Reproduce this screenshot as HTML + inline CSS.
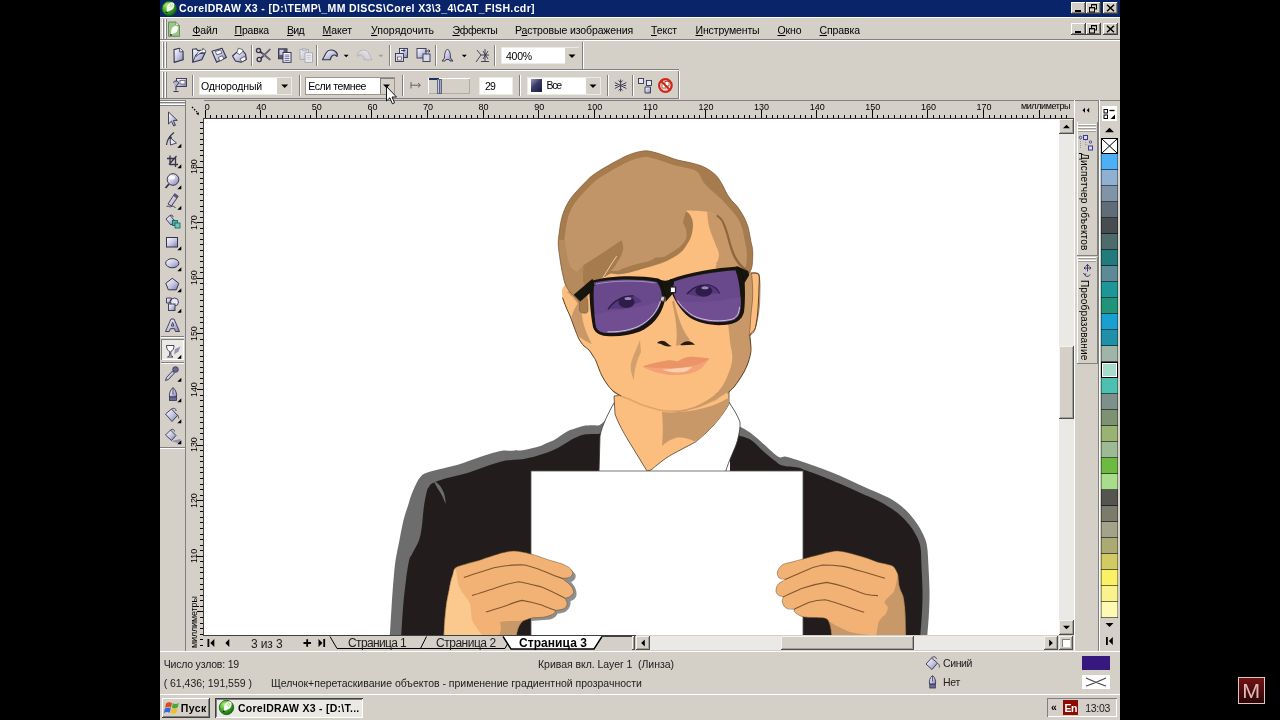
<!DOCTYPE html>
<html lang="ru"><head><meta charset="utf-8"><title>CorelDRAW X3 - [D:\TEMP\_MM DISCS\Corel X3\3_4\CAT_FISH.cdr]</title>
<style>

html,body{margin:0;padding:0;background:#000;}
body{width:1280px;height:720px;overflow:hidden;font-family:"Liberation Sans",sans-serif;font-size:11px;color:#000;}
#app{position:absolute;left:0;top:0;width:1280px;height:720px;background:#000;overflow:hidden;filter:blur(0.35px);}
.abs{position:absolute;}
#win{position:absolute;left:160px;top:0;width:960px;height:720px;background:#d4d0c8;}
#title{position:absolute;left:160px;top:0;width:960px;height:17px;background:#0a246a;}
#title .txt{position:absolute;left:19px;top:1px;color:#fff;font-weight:bold;font-size:11px;line-height:14px;white-space:nowrap;letter-spacing:0px;}
.t{position:absolute;white-space:pre;line-height:13px;font-size:11px;color:#000;}
.menu u{text-decoration:underline;}
.wbtn{position:absolute;width:15px;height:12px;background:#d4d0c8;box-shadow:inset -1px -1px 0 #404040, inset 1px 1px 0 #fff, inset -2px -2px 0 #808080;}
.sunken{position:absolute;background:#fff;box-shadow:inset 1px 1px 0 #808080, inset -1px -1px 0 #fff, inset 2px 2px 0 #404040, inset -2px -2px 0 #d4d0c8;}
.raised{position:absolute;background:#d4d0c8;box-shadow:inset -1px -1px 0 #404040, inset 1px 1px 0 #fff, inset -2px -2px 0 #808080, inset 2px 2px 0 #d4d0c8;}
.sbtn{position:absolute;background:#d4d0c8;box-shadow:inset -1px -1px 0 #505050, inset 1px 1px 0 #f4f2ee, inset -2px -2px 0 #a0a098;}
.hline{position:absolute;height:1px;background:#808080;box-shadow:0 1px 0 #fff;}
.vline{position:absolute;width:1px;background:#808080;box-shadow:1px 0 0 #fff;}
.grip{position:absolute;width:3px;background:#d4d0c8;box-shadow:inset 1px 1px 0 #fff, inset -1px -1px 0 #808080;}
.grip2{position:absolute;width:1px;background:#fff;box-shadow:1px 0 0 #808080;}
.track{position:absolute;background:#ebe9e5;}
.sw{position:absolute;left:1101px;width:17px;}
svg{position:absolute;left:0;top:0;overflow:visible;}
.vt{position:absolute;white-space:nowrap;font-size:11px;line-height:13px;transform-origin:0 0;}

</style></head>
<body>
<div id="app">
<div id="win"></div>
<div class="abs" id="canvas" style="left:204px;top:119px;width:855px;height:516px;background:#fff;"></div>
<svg width="1280" height="720" viewBox="0 0 1280 720">
<defs><clipPath id="shc"><rect x="531" y="471" width="272" height="170"/></clipPath><clipPath id="cv"><rect x="204" y="119" width="855" height="516"/></clipPath><filter id="soft" x="-5%" y="-5%" width="110%" height="110%"><feGaussianBlur stdDeviation="0.45"/></filter></defs>
<g clip-path="url(#cv)" filter="url(#soft)">
<path d="M607.5,418.0 C606.2,419.1 602.4,423.7 599.8,424.9 C597.2,426.1 594.6,425.1 592.0,425.3 C589.4,425.5 587.0,425.3 584.2,425.8 C581.4,426.3 577.9,427.5 575.0,428.5 C572.1,429.5 570.0,429.9 566.7,431.7 C563.4,433.5 558.3,437.5 555.0,439.4 C551.7,441.3 549.6,441.9 547.0,443.0 C544.4,444.1 543.4,445.1 539.5,446.3 C535.6,447.5 528.5,449.4 523.9,450.1 C519.3,450.9 515.9,450.6 512.0,450.8 C508.1,451.0 506.4,449.9 500.6,451.1 C494.8,452.3 484.3,455.6 477.2,457.9 C470.1,460.2 464.3,462.8 457.8,464.7 C451.3,466.6 443.8,468.1 438.3,469.6 C432.8,471.1 427.8,472.2 424.7,473.5 C421.6,474.8 421.3,476.1 420.0,477.5 C418.7,478.9 418.2,479.8 417.0,482.2 C415.8,484.6 413.8,488.8 412.5,492.0 C411.2,495.2 410.7,496.8 409.2,501.7 C407.7,506.6 404.9,514.6 403.3,521.1 C401.7,527.6 400.7,534.1 399.4,540.6 C398.1,547.1 396.6,553.4 395.6,560.0 C394.6,566.6 394.2,572.0 393.5,580.0 C392.8,588.0 392.1,598.0 391.5,608.0 C390.9,618.0 389.9,634.7 389.6,640.0 L610,640 L610,436 Z" fill="#6d6d6d"/>
<path d="M736.0,422.0 C736.4,422.6 736.0,423.7 738.5,425.6 C741.0,427.5 746.6,430.1 751.0,433.3 C755.4,436.5 760.2,441.1 764.7,445.0 C769.2,448.9 774.8,454.8 778.3,456.7 C781.8,458.6 782.1,455.9 786.0,456.7 C789.9,457.5 795.9,459.6 801.7,461.5 C807.5,463.4 814.5,465.9 821.0,468.3 C827.5,470.7 834.1,473.2 840.6,476.0 C847.1,478.8 853.5,482.0 860.0,484.9 C866.5,487.8 873.7,490.9 879.5,493.6 C885.3,496.4 890.5,498.5 895.0,501.4 C899.5,504.3 903.1,507.4 906.7,511.0 C910.3,514.6 913.6,518.9 916.4,522.8 C919.1,526.7 921.4,530.6 923.2,534.5 C925.0,538.4 926.1,540.6 927.0,546.0 C927.9,551.4 928.1,559.5 928.5,567.0 C928.9,574.5 929.4,583.5 929.5,591.0 C929.6,598.5 929.4,603.8 929.0,612.0 C928.6,620.2 927.3,635.3 927.0,640.0 L730,640 L730,436 Z" fill="#6d6d6d"/>
<path d="M603.0,430.0 C602.8,430.6 603.4,432.9 601.7,433.6 C600.0,434.3 595.9,433.8 593.0,434.0 C590.1,434.2 587.0,434.0 584.2,434.6 C581.4,435.2 578.6,436.4 576.0,437.5 C573.4,438.6 572.1,439.4 568.6,441.4 C565.1,443.3 559.9,446.9 555.0,449.2 C550.1,451.5 544.7,453.4 539.5,455.0 C534.3,456.6 529.7,457.9 523.9,458.9 C518.1,459.9 511.0,459.5 504.5,460.8 C498.0,462.1 491.5,464.6 485.0,466.7 C478.5,468.8 472.1,471.6 465.6,473.5 C459.1,475.4 451.6,476.7 446.1,478.3 C440.6,479.9 435.4,481.7 432.5,483.2 C429.6,484.7 429.5,486.0 428.5,487.5 C427.5,489.0 427.5,488.7 426.7,492.0 C425.9,495.3 424.6,501.7 423.8,507.5 C423.0,513.3 422.6,521.5 421.8,527.0 C421.0,532.5 420.5,536.1 418.9,540.6 C417.3,545.1 413.6,551.0 412.0,554.2 C410.4,557.4 410.2,555.7 409.2,560.0 C408.2,564.3 407.0,571.8 406.0,579.8 C405.0,587.8 403.8,598.0 403.0,608.0 C402.2,618.0 401.3,634.7 401.0,640.0 L610,640 L610,440 Z" fill="#211e1b"/>
<path d="M736.0,432.0 C736.4,432.6 736.0,434.0 738.5,435.3 C741.0,436.6 747.0,437.4 751.0,440.0 C755.0,442.6 758.9,447.4 762.8,450.8 C766.7,454.2 771.3,458.2 774.5,460.6 C777.7,463.0 778.3,464.3 782.2,465.4 C786.1,466.5 793.9,466.6 797.8,467.4 C801.7,468.2 801.7,468.9 805.6,470.3 C809.5,471.7 815.2,473.7 821.0,476.0 C826.8,478.3 834.1,481.2 840.6,484.0 C847.1,486.8 853.5,489.8 860.0,492.7 C866.5,495.6 873.7,498.3 879.5,501.4 C885.3,504.4 890.5,507.6 895.0,511.0 C899.5,514.4 903.5,518.2 906.7,521.8 C910.0,525.4 912.2,528.5 914.5,532.5 C916.8,536.5 919.1,540.2 920.3,546.0 C921.5,551.8 921.1,559.5 921.5,567.0 C921.9,574.5 922.4,583.5 922.5,591.0 C922.6,598.5 922.4,603.8 922.0,612.0 C921.6,620.2 920.3,635.3 920.0,640.0 L730,640 L730,440 Z" fill="#211e1b"/>
<path d="M434,481.500 C438,482.500 441.500,487 443.500,492 C445,496 445.800,500 445.500,504 C443.500,498 441,493 438,489 C436.500,486.500 435,484 434,481.500Z" fill="#6d6d6d"/>
<path d="M614,403 C609,412 602,425 600,436 L599,472 L725.500,472 C729,460 735,449 737.400,440.800 C739,434 740.500,428 740,422 C737,414 732,407 729,402 Z" fill="#fff" stroke="#333" stroke-width="0.8"/>
<path d="M614,396 L615,414 C619,425 624,433 628,440 L647,471 L651,470 C657,465 664,459 671,455 C680,450 688,446 695.5,442 C708,432 720,420 729,404 L729,385 Z" fill="#fbbe7e" stroke="#3a2a1a" stroke-width="0.7"/>
<path d="M662,412 C685,414 712,408 728.500,398 L729,404 C720,420 708,432 695.500,442 C690,438.500 683,437 677,437.500 C671,439 666,442 662,446 C663,436 663,424 662,412Z" fill="#c99868"/>
<rect x="531" y="471" width="272" height="170" fill="#fff" stroke="#555" stroke-width="0.8"/>
<path d="M562.5,297.5 C562.7,301.2 564.8,303.9 566.0,307.0 C567.2,310.1 568.6,312.5 570.0,316.0 C571.4,319.5 573.0,324.2 574.5,328.0 C576.0,331.8 577.4,336.0 579.0,339.0 C580.6,342.0 582.3,344.2 584.0,346.0 C585.7,347.8 587.5,348.3 589.0,350.0 C590.5,351.7 591.8,354.2 593.0,356.0 C594.2,357.8 595.0,358.8 596.0,361.0 C597.0,363.2 598.0,366.5 599.0,369.0 C600.0,371.5 600.7,373.5 602.0,376.0 C603.3,378.5 605.2,381.5 607.0,384.0 C608.8,386.5 610.7,389.0 613.0,391.0 C615.3,393.0 618.2,394.6 621.0,396.0 C623.8,397.4 626.7,398.1 630.0,399.5 C633.3,400.9 637.2,403.1 641.0,404.5 C644.8,405.9 649.0,407.0 652.5,408.0 C656.0,409.0 658.9,410.0 662.0,410.5 C665.1,411.0 667.5,411.0 671.0,411.0 C674.5,411.0 679.2,411.0 683.0,410.5 C686.8,410.0 690.8,408.8 694.0,408.0 C697.2,407.2 699.5,406.4 702.0,405.5 C704.5,404.6 706.3,403.7 709.0,402.5 C711.7,401.3 714.9,400.1 718.0,398.5 C721.1,396.9 724.8,394.9 727.5,393.0 C730.2,391.1 732.1,389.2 734.0,387.0 C735.9,384.8 737.3,382.5 739.0,380.0 C740.7,377.5 742.5,374.8 744.0,372.0 C745.5,369.2 747.0,365.7 748.0,363.0 C749.0,360.3 749.5,358.2 750.0,356.0 C750.5,353.8 750.9,352.3 751.0,350.0 C751.1,347.7 750.7,344.5 750.5,342.0 C750.3,339.5 749.6,336.8 750.0,335.0 C750.4,333.2 752.1,332.8 753.0,331.5 C753.9,330.2 754.8,330.2 755.5,327.5 C756.2,324.8 757.0,319.4 757.5,315.0 C758.0,310.6 758.2,305.5 758.5,301.0 C758.8,296.5 758.9,292.3 759.0,288.0 C759.1,283.7 759.7,277.5 759.0,275.0 C758.3,272.5 756.3,273.3 755.0,273.0 C753.7,272.7 752.2,276.8 751.0,273.0 C749.8,269.2 756.5,261.3 748.0,250.0 C739.5,238.7 718.0,206.7 700.0,205.0 C682.0,203.3 658.3,229.2 640.0,240.0 C621.7,250.8 602.5,262.5 590.0,270.0 C577.5,277.5 569.6,280.4 565.0,285.0 C560.4,289.6 562.3,293.8 562.5,297.5Z" fill="#fbbe7e"/>
<path d="M613.0,391.0 C614.3,391.8 618.2,394.6 621.0,396.0 C623.8,397.4 626.7,398.1 630.0,399.5 C633.3,400.9 637.2,403.1 641.0,404.5 C644.8,405.9 649.0,407.0 652.5,408.0 C656.0,409.0 658.9,410.0 662.0,410.5 C665.1,411.0 667.5,411.0 671.0,411.0 C674.5,411.0 679.2,411.0 683.0,410.5 C686.8,410.0 690.8,408.8 694.0,408.0 C697.2,407.2 699.5,406.4 702.0,405.5 C704.5,404.6 706.3,403.7 709.0,402.5 C711.7,401.3 716.5,399.2 718.0,398.5" fill="none" stroke="#e2a468" stroke-width="1.600"/>
<path d="M716,262 C722,285 726,300 727.500,318 C728.400,326 729.500,336 730.300,344 C731.500,350 732.500,354 732.300,357.800 C732,364 730.500,369 728.400,373.400 C726,380 723,386 718.600,391 C712,398 704,403 695.300,406.500 C688,409.500 679,411.500 670,412 C680,412.500 688,410.500 694,408 C700,406.500 706,404 709,402.500 C718,398.500 727.500,393 734,387 C739,381 745,371 748,363 C751,352 751,342 750,335 C755,330 757,318 758.500,301 L759,275 L751,273 L748,262Z" fill="#c99868"/>
<path d="M751.500,273.500 C754,272.500 757,273 759,274.500 C760,280 760.300,285 760,290 C760,295 759.800,300 759.500,305 C759,310 758.500,315 757.500,319 C756.500,324 755.500,328 754,332 C752.500,334 751,335 749,335.500 C750,331 750.300,326 750.500,320 C751,313 752,306 752.500,300 C752.800,295 752.800,290 752.500,285 C752.300,281 752,277 751.500,273.500Z" fill="#fbbe7e" stroke="#5a4028" stroke-width="0.500"/>
<path d="M579,301.400 C576,306 573,311 571.400,317 C573,324 576,331 579,336.400 C583,339.500 587,342 591.800,344 C589,339 587,334 585,328.600 C583.500,324 582.500,320 582,315 C581.500,310 580.500,305 579,301.400Z" fill="#c99868"/>
<path d="M567,292 C572,296 578,302 582,312 C584,300 582,292 577,287Z" fill="#c99868"/>
<path d="M640,340 C636,350 632,358 631,364 C630,370 632,376 634,380 C634,372 636,362 641,352Z" fill="#c99868" opacity="0.8"/>
<path d="M674,300 C677,315 682,330 690,340 C686,343 680,345 676,346 C678,335 676,318 672,302Z" fill="#c99868"/>
<path d="M657,343 C660,340 664,340 667,343 C669,345 671,346 672,346 C668,347 664,346 661,344 Z" fill="#2a1a10"/>
<path d="M680,345 C684,341 689,340 693,343 L695,345 C690,344 685,346 680,345Z" fill="#2a1a10"/>
<path d="M562.5,297.5 C563.1,299.1 564.8,303.9 566.0,307.0 C567.2,310.1 568.6,312.5 570.0,316.0 C571.4,319.5 573.0,324.2 574.5,328.0 C576.0,331.8 577.4,336.0 579.0,339.0 C580.6,342.0 582.3,344.2 584.0,346.0 C585.7,347.8 587.5,348.3 589.0,350.0 C590.5,351.7 591.8,354.2 593.0,356.0 C594.2,357.8 595.0,358.8 596.0,361.0 C597.0,363.2 598.0,366.5 599.0,369.0 C600.0,371.5 600.7,373.5 602.0,376.0 C603.3,378.5 605.2,381.5 607.0,384.0 C608.8,386.5 610.7,389.0 613.0,391.0 C615.3,393.0 619.7,395.2 621.0,396.0" fill="none" stroke="#4a3018" stroke-width="0.900"/>
<path d="M727.5,393.0 C728.6,392.0 732.1,389.2 734.0,387.0 C735.9,384.8 737.3,382.5 739.0,380.0 C740.7,377.5 742.5,374.8 744.0,372.0 C745.5,369.2 747.0,365.7 748.0,363.0 C749.0,360.3 749.5,358.2 750.0,356.0 C750.5,353.8 750.9,352.3 751.0,350.0 C751.1,347.7 750.7,344.5 750.5,342.0 C750.3,339.5 749.6,336.8 750.0,335.0 C750.4,333.2 752.1,332.8 753.0,331.5 C753.9,330.2 754.8,330.2 755.5,327.5 C756.2,324.8 757.0,319.4 757.5,315.0 C758.0,310.6 758.2,305.5 758.5,301.0 C758.8,296.5 758.9,292.3 759.0,288.0 C759.1,283.7 759.7,277.5 759.0,275.0 C758.3,272.5 756.3,273.3 755.0,273.0 C753.7,272.7 751.7,273.0 751.0,273.0" fill="none" stroke="#4a3018" stroke-width="0.900"/>
<path d="M642.500,366.500 C650,364 658,362 665,361 C670,360 674,361 677.500,361.500 C682,359 686,357 690,356.800 C697,357 704,357.800 709.500,358.500 C707,362 704,365 702.500,367.500 C698,371 693,373 687.500,374 C682,375 676,375.300 670,375 C664,374.300 659,373 655,372 C650,370.500 646,368.500 642.500,366.500Z" fill="#f2a274"/>
<path d="M642.500,366.500 C650,364 658,362 665,361 C670,360 674,361 677.500,361.500 C682,359 686,357 690,356.800 C697,357 704,357.800 709.500,358.500 C705,361.500 700,364 694,365.500 C686,367.500 676,368 668,368 C659,368 650,367.500 642.500,366.500Z" fill="#ea9468"/>
<path d="M662,369.500 C670,368.800 684,368 692,366.500 C691,369 688,371 684,372 C677,373 668,372.500 662,369.500Z" fill="#fbcfb0"/>
<clipPath id="hc"><path d="M647.0,150.8 C649.8,151.1 654.2,152.2 657.0,153.0 C659.8,153.8 661.7,154.5 664.0,155.3 C666.3,156.1 668.7,157.0 671.0,157.8 C673.3,158.6 675.5,159.4 677.8,160.0 C680.1,160.6 682.7,161.1 685.0,161.6 C687.3,162.1 689.4,162.4 691.7,163.0 C694.0,163.6 696.7,164.2 699.0,165.0 C701.3,165.8 703.5,166.7 705.6,167.8 C707.7,168.9 709.6,170.1 711.5,171.5 C713.4,172.9 715.2,174.3 716.7,176.0 C718.2,177.7 719.4,179.7 720.5,181.5 C721.6,183.3 722.7,185.2 723.6,187.0 C724.5,188.8 725.1,190.3 726.0,192.0 C726.9,193.7 727.8,195.3 729.0,197.0 C730.2,198.7 731.6,200.4 733.0,202.0 C734.4,203.6 736.2,205.0 737.5,206.7 C738.8,208.4 739.9,210.2 741.0,212.0 C742.1,213.8 743.4,215.9 744.4,217.8 C745.4,219.7 746.1,221.6 746.8,223.5 C747.5,225.4 748.0,226.2 748.6,229.0 C749.2,231.8 750.1,236.8 750.7,240.0 C751.3,243.2 752.0,245.3 752.4,248.0 C752.8,250.7 752.9,252.9 752.8,256.0 C752.7,259.1 752.5,264.0 752.0,266.7 C751.5,269.4 750.5,271.3 749.5,272.0 C748.5,272.7 747.1,271.8 746.0,271.0 C744.9,270.2 743.8,268.6 742.6,267.3 C741.4,266.1 740.2,264.9 739.0,263.5 C737.8,262.1 736.6,260.8 735.6,259.0 C734.6,257.2 733.8,255.0 733.0,253.0 C732.2,251.0 731.5,249.3 730.8,247.2 C730.1,245.1 729.6,242.7 729.0,240.5 C728.4,238.3 728.0,236.4 727.3,234.2 C726.6,232.0 725.8,229.7 725.0,227.5 C724.2,225.3 723.4,222.9 722.6,221.3 C721.8,219.7 721.0,219.0 720.0,218.0 C719.0,217.0 718.0,216.1 716.7,215.3 C715.4,214.5 713.6,213.8 712.0,213.2 C710.4,212.6 709.7,212.2 707.2,211.8 C704.7,211.4 700.4,211.0 697.0,210.8 C693.6,210.6 687.9,210.1 686.6,210.6 C685.4,211.1 688.6,212.8 689.5,214.0 C690.4,215.2 691.1,216.5 691.7,217.8 C692.3,219.1 692.8,220.6 693.0,222.0 C693.2,223.4 693.2,224.2 693.0,226.0 C692.8,227.8 692.5,230.8 692.0,233.0 C691.5,235.2 691.0,236.8 690.0,239.0 C689.0,241.2 687.3,243.9 686.0,246.0 C684.7,248.1 683.8,249.7 682.0,251.4 C680.2,253.2 677.5,254.9 675.0,256.5 C672.5,258.1 669.5,259.7 666.7,261.0 C663.9,262.3 660.8,263.6 658.0,264.5 C655.2,265.4 653.0,265.9 650.0,266.7 C647.0,267.5 643.7,268.4 640.0,269.5 C636.3,270.6 631.5,272.2 627.8,273.0 C624.1,273.8 620.8,274.4 618.0,274.5 C615.2,274.6 613.1,273.3 611.0,273.6 C608.9,273.9 607.3,275.5 605.5,276.4 C603.7,277.3 601.6,278.2 600.0,279.0 C598.4,279.8 597.3,280.2 596.0,281.0 C594.7,281.8 593.2,282.5 592.0,284.0 C590.8,285.5 589.8,287.5 589.0,290.0 C588.2,292.5 587.8,295.3 587.5,299.0 C587.2,302.7 588.8,309.9 587.5,312.0 C586.2,314.1 581.4,313.1 580.0,311.6 C578.6,310.1 580.2,305.4 579.4,303.0 C578.6,300.6 576.6,298.8 575.0,297.0 C573.4,295.2 571.6,294.0 570.0,292.0 C568.4,290.0 566.7,287.7 565.5,285.0 C564.3,282.3 563.8,279.2 563.0,276.0 C562.2,272.8 561.6,269.3 561.0,266.0 C560.4,262.7 559.9,259.0 559.5,256.0 C559.1,253.0 558.7,250.7 558.5,248.0 C558.3,245.3 558.1,243.2 558.3,240.0 C558.5,236.8 559.3,232.0 559.7,229.0 C560.1,226.0 560.3,224.3 560.8,222.0 C561.3,219.7 561.8,217.2 562.5,215.0 C563.2,212.8 564.1,210.6 565.0,208.5 C565.9,206.4 566.8,204.6 568.0,202.5 C569.2,200.4 570.9,198.1 572.5,196.0 C574.1,193.9 575.8,192.2 577.8,190.0 C579.8,187.8 582.2,185.3 584.5,183.0 C586.8,180.7 589.4,177.9 591.7,176.0 C594.0,174.1 596.2,172.8 598.5,171.3 C600.8,169.8 603.3,168.4 605.6,167.0 C607.9,165.6 610.2,164.3 612.5,163.0 C614.8,161.7 617.1,160.6 619.4,159.4 C621.6,158.2 623.7,157.0 626.0,156.0 C628.3,155.0 631.0,153.9 633.3,153.2 C635.6,152.4 637.7,151.9 640.0,151.5 C642.3,151.1 644.2,150.6 647.0,150.8Z"/></clipPath>
<path d="M647.0,150.8 C649.8,151.1 654.2,152.2 657.0,153.0 C659.8,153.8 661.7,154.5 664.0,155.3 C666.3,156.1 668.7,157.0 671.0,157.8 C673.3,158.6 675.5,159.4 677.8,160.0 C680.1,160.6 682.7,161.1 685.0,161.6 C687.3,162.1 689.4,162.4 691.7,163.0 C694.0,163.6 696.7,164.2 699.0,165.0 C701.3,165.8 703.5,166.7 705.6,167.8 C707.7,168.9 709.6,170.1 711.5,171.5 C713.4,172.9 715.2,174.3 716.7,176.0 C718.2,177.7 719.4,179.7 720.5,181.5 C721.6,183.3 722.7,185.2 723.6,187.0 C724.5,188.8 725.1,190.3 726.0,192.0 C726.9,193.7 727.8,195.3 729.0,197.0 C730.2,198.7 731.6,200.4 733.0,202.0 C734.4,203.6 736.2,205.0 737.5,206.7 C738.8,208.4 739.9,210.2 741.0,212.0 C742.1,213.8 743.4,215.9 744.4,217.8 C745.4,219.7 746.1,221.6 746.8,223.5 C747.5,225.4 748.0,226.2 748.6,229.0 C749.2,231.8 750.1,236.8 750.7,240.0 C751.3,243.2 752.0,245.3 752.4,248.0 C752.8,250.7 752.9,252.9 752.8,256.0 C752.7,259.1 752.5,264.0 752.0,266.7 C751.5,269.4 750.5,271.3 749.5,272.0 C748.5,272.7 747.1,271.8 746.0,271.0 C744.9,270.2 743.8,268.6 742.6,267.3 C741.4,266.1 740.2,264.9 739.0,263.5 C737.8,262.1 736.6,260.8 735.6,259.0 C734.6,257.2 733.8,255.0 733.0,253.0 C732.2,251.0 731.5,249.3 730.8,247.2 C730.1,245.1 729.6,242.7 729.0,240.5 C728.4,238.3 728.0,236.4 727.3,234.2 C726.6,232.0 725.8,229.7 725.0,227.5 C724.2,225.3 723.4,222.9 722.6,221.3 C721.8,219.7 721.0,219.0 720.0,218.0 C719.0,217.0 718.0,216.1 716.7,215.3 C715.4,214.5 713.6,213.8 712.0,213.2 C710.4,212.6 709.7,212.2 707.2,211.8 C704.7,211.4 700.4,211.0 697.0,210.8 C693.6,210.6 687.9,210.1 686.6,210.6 C685.4,211.1 688.6,212.8 689.5,214.0 C690.4,215.2 691.1,216.5 691.7,217.8 C692.3,219.1 692.8,220.6 693.0,222.0 C693.2,223.4 693.2,224.2 693.0,226.0 C692.8,227.8 692.5,230.8 692.0,233.0 C691.5,235.2 691.0,236.8 690.0,239.0 C689.0,241.2 687.3,243.9 686.0,246.0 C684.7,248.1 683.8,249.7 682.0,251.4 C680.2,253.2 677.5,254.9 675.0,256.5 C672.5,258.1 669.5,259.7 666.7,261.0 C663.9,262.3 660.8,263.6 658.0,264.5 C655.2,265.4 653.0,265.9 650.0,266.7 C647.0,267.5 643.7,268.4 640.0,269.5 C636.3,270.6 631.5,272.2 627.8,273.0 C624.1,273.8 620.8,274.4 618.0,274.5 C615.2,274.6 613.1,273.3 611.0,273.6 C608.9,273.9 607.3,275.5 605.5,276.4 C603.7,277.3 601.6,278.2 600.0,279.0 C598.4,279.8 597.3,280.2 596.0,281.0 C594.7,281.8 593.2,282.5 592.0,284.0 C590.8,285.5 589.8,287.5 589.0,290.0 C588.2,292.5 587.8,295.3 587.5,299.0 C587.2,302.7 588.8,309.9 587.5,312.0 C586.2,314.1 581.4,313.1 580.0,311.6 C578.6,310.1 580.2,305.4 579.4,303.0 C578.6,300.6 576.6,298.8 575.0,297.0 C573.4,295.2 571.6,294.0 570.0,292.0 C568.4,290.0 566.7,287.7 565.5,285.0 C564.3,282.3 563.8,279.2 563.0,276.0 C562.2,272.8 561.6,269.3 561.0,266.0 C560.4,262.7 559.9,259.0 559.5,256.0 C559.1,253.0 558.7,250.7 558.5,248.0 C558.3,245.3 558.1,243.2 558.3,240.0 C558.5,236.8 559.3,232.0 559.7,229.0 C560.1,226.0 560.3,224.3 560.8,222.0 C561.3,219.7 561.8,217.2 562.5,215.0 C563.2,212.8 564.1,210.6 565.0,208.5 C565.9,206.4 566.8,204.6 568.0,202.5 C569.2,200.4 570.9,198.1 572.5,196.0 C574.1,193.9 575.8,192.2 577.8,190.0 C579.8,187.8 582.2,185.3 584.5,183.0 C586.8,180.7 589.4,177.9 591.7,176.0 C594.0,174.1 596.2,172.8 598.5,171.3 C600.8,169.8 603.3,168.4 605.6,167.0 C607.9,165.6 610.2,164.3 612.5,163.0 C614.8,161.7 617.1,160.6 619.4,159.4 C621.6,158.2 623.7,157.0 626.0,156.0 C628.3,155.0 631.0,153.9 633.3,153.2 C635.6,152.4 637.7,151.9 640.0,151.5 C642.3,151.1 644.2,150.6 647.0,150.8Z" fill="#c29567"/>
<path d="M587.5,299.0 C587.5,301.2 588.8,309.9 587.5,312.0 C586.2,314.1 581.4,313.1 580.0,311.6 C578.6,310.1 580.2,305.4 579.4,303.0 C578.6,300.6 576.6,298.8 575.0,297.0 C573.4,295.2 571.6,294.0 570.0,292.0 C568.4,290.0 566.7,287.7 565.5,285.0 C564.3,282.3 563.8,279.2 563.0,276.0 C562.2,272.8 561.6,269.3 561.0,266.0 C560.4,262.7 559.9,259.0 559.5,256.0 C559.1,253.0 558.7,250.7 558.5,248.0 C558.3,245.3 558.1,243.2 558.3,240.0 C558.5,236.8 559.3,232.0 559.7,229.0 C560.1,226.0 560.3,224.3 560.8,222.0 C561.3,219.7 561.8,217.2 562.5,215.0 C563.2,212.8 564.1,210.6 565.0,208.5 C565.9,206.4 566.8,204.6 568.0,202.5 C569.2,200.4 570.9,198.1 572.5,196.0 C574.1,193.9 575.8,192.2 577.8,190.0 C579.8,187.8 582.2,185.3 584.5,183.0 C586.8,180.7 589.4,177.9 591.7,176.0 C594.0,174.1 596.2,172.8 598.5,171.3 C600.8,169.8 603.3,168.4 605.6,167.0 C607.9,165.6 610.2,164.3 612.5,163.0 C614.8,161.7 617.1,160.6 619.4,159.4 C621.6,158.2 623.7,157.0 626.0,156.0 C628.3,155.0 631.0,153.9 633.3,153.2 C635.6,152.4 637.7,151.9 640.0,151.5 C642.3,151.1 644.2,150.6 647.0,150.8 C649.8,151.1 654.2,152.2 657.0,153.0 C659.8,153.8 661.7,154.5 664.0,155.3 C666.3,156.1 668.7,157.0 671.0,157.8 C673.3,158.6 675.5,159.4 677.8,160.0 C680.1,160.6 682.7,161.1 685.0,161.6 C687.3,162.1 689.4,162.4 691.7,163.0 C694.0,163.6 696.7,164.2 699.0,165.0 C701.3,165.8 703.5,166.7 705.6,167.8 C707.7,168.9 709.6,170.1 711.5,171.5 C713.4,172.9 715.2,174.3 716.7,176.0 C718.2,177.7 719.4,179.7 720.5,181.5 C721.6,183.3 722.7,185.2 723.6,187.0 C724.5,188.8 725.1,190.3 726.0,192.0 C726.9,193.7 727.8,195.3 729.0,197.0 C730.2,198.7 731.6,200.4 733.0,202.0 C734.4,203.6 736.2,205.0 737.5,206.7 C738.8,208.4 739.9,210.2 741.0,212.0 C742.1,213.8 743.4,215.9 744.4,217.8 C745.4,219.7 746.1,221.6 746.8,223.5 C747.5,225.4 748.0,226.2 748.6,229.0 C749.2,231.8 750.1,236.8 750.7,240.0 C751.3,243.2 752.0,245.3 752.4,248.0 C752.8,250.7 752.9,252.9 752.8,256.0 C752.7,259.1 752.5,264.0 752.0,266.7 C751.5,269.4 749.9,271.1 749.5,272.0" fill="none" stroke="#a67b50" stroke-width="12" clip-path="url(#hc)"/>
<g clip-path="url(#hc)">
<path d="M650,150 L664,155.300 L677.800,160 L691.700,163 L705.600,167.800 L716.700,176 L723.600,187 L729,197 L737.500,206.700 L744.400,217.800 L748.600,229 L751,240 L747,236 L741.700,223 L733,212 L722,199.700 L711,190 L704,183 L698.600,173 L691.700,167.800 L677.800,165 L664,160.800 L650,157.400Z" fill="#a67b50"/>
<path d="M686.800,210.800 C690,214 692.500,219 693,226 C693,233 691,240 686,246 C682,252 675,257 666.700,261 C661,263 655,264.800 650,266.700 C642,269 635,271.500 627.800,273 C621,274.500 615,274 611,273.600 L605.500,276.400 L598,280.500 L604,272 L611,271 L618,271 C622,268.500 625,267.500 627.800,266.700 C635,264.500 641,263 647,261.800 C651,260.500 654,259 655.500,257.600 C660,257.500 663,257 664,257 C670,253.500 674,251 677.800,248.600 C681,246 684,243 686,239 C687.500,233 686,227 683,223 C684,218 685,214 686.800,210.800Z" fill="#a67b50"/>
<path d="M621.500,240.300 C623,244 623.500,247 623,250 C622,254 620.500,258 618,261 C616,265 613.500,268 611,271 L605.500,276.400 L596,280.500 C592,283 589,288 587.500,296 L587.500,312.500 L580,312.500 C580,306 579,300 576,296 L584.700,286 L582.600,280.500 L583.300,265.300 C596,257 609,249 621.500,240.300Z" fill="#a67b50"/>
<path d="M616.700,256 C612,263 607,271 602.800,277.800" fill="none" stroke="#f3d6b0" stroke-width="0.9"/>
<path d="M558,240 C560,258 563,276 568,290 L576,297 L584.700,286 L582.600,280.500 L583.300,265.300 L577,272 L571,268 C568,262 566,252 565,240Z" fill="#b58a5b"/>
<path d="M720,218 C722,221 724,225 725,227.500 C726.500,232 728,237 729,240.500 C730,245 731.500,249 733,253 C735,258 738,263 742.600,267.300 C745,269.500 747.500,271.500 749.700,273.200" fill="none" stroke="#8f663c" stroke-width="2.200"/>
</g>
<path d="M587.5,299.0 C587.5,301.2 588.8,309.9 587.5,312.0 C586.2,314.1 581.4,313.1 580.0,311.6 C578.6,310.1 580.2,305.4 579.4,303.0 C578.6,300.6 576.6,298.8 575.0,297.0 C573.4,295.2 571.6,294.0 570.0,292.0 C568.4,290.0 566.7,287.7 565.5,285.0 C564.3,282.3 563.8,279.2 563.0,276.0 C562.2,272.8 561.6,269.3 561.0,266.0 C560.4,262.7 559.9,259.0 559.5,256.0 C559.1,253.0 558.7,250.7 558.5,248.0 C558.3,245.3 558.1,243.2 558.3,240.0 C558.5,236.8 559.3,232.0 559.7,229.0 C560.1,226.0 560.3,224.3 560.8,222.0 C561.3,219.7 561.8,217.2 562.5,215.0 C563.2,212.8 564.1,210.6 565.0,208.5 C565.9,206.4 566.8,204.6 568.0,202.5 C569.2,200.4 570.9,198.1 572.5,196.0 C574.1,193.9 575.8,192.2 577.8,190.0 C579.8,187.8 582.2,185.3 584.5,183.0 C586.8,180.7 589.4,177.9 591.7,176.0 C594.0,174.1 596.2,172.8 598.5,171.3 C600.8,169.8 603.3,168.4 605.6,167.0 C607.9,165.6 610.2,164.3 612.5,163.0 C614.8,161.7 617.1,160.6 619.4,159.4 C621.6,158.2 623.7,157.0 626.0,156.0 C628.3,155.0 631.0,153.9 633.3,153.2 C635.6,152.4 637.7,151.9 640.0,151.5 C642.3,151.1 644.2,150.6 647.0,150.8 C649.8,151.1 654.2,152.2 657.0,153.0 C659.8,153.8 661.7,154.5 664.0,155.3 C666.3,156.1 668.7,157.0 671.0,157.8 C673.3,158.6 675.5,159.4 677.8,160.0 C680.1,160.6 682.7,161.1 685.0,161.6 C687.3,162.1 689.4,162.4 691.7,163.0 C694.0,163.6 696.7,164.2 699.0,165.0 C701.3,165.8 703.5,166.7 705.6,167.8 C707.7,168.9 709.6,170.1 711.5,171.5 C713.4,172.9 715.2,174.3 716.7,176.0 C718.2,177.7 719.4,179.7 720.5,181.5 C721.6,183.3 722.7,185.2 723.6,187.0 C724.5,188.8 725.1,190.3 726.0,192.0 C726.9,193.7 727.8,195.3 729.0,197.0 C730.2,198.7 731.6,200.4 733.0,202.0 C734.4,203.6 736.2,205.0 737.5,206.7 C738.8,208.4 739.9,210.2 741.0,212.0 C742.1,213.8 743.4,215.9 744.4,217.8 C745.4,219.7 746.1,221.6 746.8,223.5 C747.5,225.4 748.0,226.2 748.6,229.0 C749.2,231.8 750.1,236.8 750.7,240.0 C751.3,243.2 752.0,245.3 752.4,248.0 C752.8,250.7 752.9,252.9 752.8,256.0 C752.7,259.1 752.5,264.0 752.0,266.7 C751.5,269.4 749.9,271.1 749.5,272.0" fill="none" stroke="#7a5a3a" stroke-width="0.7" opacity="0.8"/>
<path d="M707.200,211.800 C711,212.500 714,213.800 716.700,215.300 C719,217 721,219 722.600,221.300 C724.500,225.500 726,230 727.300,234.200 C728.500,238.500 729.500,243 730.800,247.200 C732,251.500 733.500,255.500 735.600,259 C737,262 739,265 741,267.500 L737,270 L715.500,268 C716.500,264 718.500,260 719,255.500 C719,252.500 718,250 716.700,247.200 C715,243 713.500,239.500 712,235.400 C710.500,231.500 709,227.500 708.400,223.600 C707.800,219.500 707.300,215.500 707.200,211.800Z" fill="#c99868"/>
<path d="M716.700,215.300 C719,217 721,219 722.600,221.300 C724.500,225.500 726,230 727.300,234.200 C728.500,238.500 729.500,243 730.800,247.200 C732,251.500 733.500,255.500 735.600,259 C738,263 741,266.500 744,269 C746,270.800 748,272.200 749.700,273.200" fill="none" stroke="#8f663c" stroke-width="2"/>
<path d="M589.500,281.500 C606,276 636,274.500 658,278.500 L665,283 C665.500,290 665.500,297 664.500,302 C661,316 652,326 640,331.500 C630,335.500 618,336.800 606,336 C599,335.500 594.500,332 593,327 C590.500,314 589,296 589.500,281.500Z" fill="#17120f"/>
<path d="M670,279.500 C690,272 716,268 738,266.500 L744,270 C745,284 745.500,300 744,312 C742,320 736,324 724,325 C711,325.800 698,323 689,317 C680,310 673,298 670,288Z" fill="#17120f"/>
<path d="M594,282.500 C610,279.300 636,278.200 657,282 C660.500,287 662,293 662,298.500 C659,311 651,321 638.500,327.500 C629,331.800 617,333.400 607,333 C600.500,332.500 597,330 596,326.500 C594,314 593,296 594,282.500Z" fill="#69488c"/>
<path d="M674,281.500 C692,275.500 716,271.500 735.500,270.300 C738,277 739.500,285 740,292 C740.800,299 740.800,304 740.500,307 C740,314 738,318 733,320 C725,322.500 714,322.500 706,321 C699,319.500 694,317.500 690,315 C683.500,310 679,305 676.500,301 C673.500,295 672,288 674,281.500Z" fill="#69488c"/>
<clipPath id="l1"><path d="M594,282.500 C610,279.300 636,278.200 657,282 C660.500,287 662,293 662,298.500 C659,311 651,321 638.500,327.500 C629,331.800 617,333.400 607,333 C600.500,332.500 597,330 596,326.500 C594,314 593,296 594,282.500Z"/></clipPath><clipPath id="l2"><path d="M674,281.500 C692,275.500 716,271.500 735.500,270.300 C738,277 739.500,285 740,292 C740.800,299 740.800,304 740.500,307 C740,314 738,318 733,320 C725,322.500 714,322.500 706,321 C699,319.500 694,317.500 690,315 C683.500,310 679,305 676.500,301 C673.500,295 672,288 674,281.500Z"/></clipPath>
<path d="M590,316 C606,310 634,310 664,300 L664,340 L590,340Z" fill="#714e92" clip-path="url(#l1)"/>
<path d="M672,300 C690,304 716,302 744,296 L744,330 L672,330Z" fill="#714e92" clip-path="url(#l2)"/>
<path d="M657,278.300 C662,281 667,281.500 671,279 L674,283 C672,288 672,291 672.500,294 L665.500,302 C665.500,296 664,290 662,285Z" fill="#17120f"/>
<path d="M573.700,294.700 L592.500,278.800 L594.400,285.300 L591,292 L580.300,301.500Z" fill="#17120f"/>
<path d="M736,266 L748,271 L749.300,275 L744.500,283 L742,272Z" fill="#17120f"/>
<path d="M596,284 C612,280.800 636,279.800 655.500,283" fill="none" stroke="#cfc6dc" stroke-width="0.7" opacity="0.8"/>
<path d="M661,299 C658,311 650,320.500 638,326.500 C629,330.600 617,332.200 607.500,331.800" fill="none" stroke="#d8d0e2" stroke-width="0.9"/>
<path d="M739.500,307 C739,313.500 737,317 732.500,319 C725,321.300 714,321.300 706,319.800 C699,318.500 694,316.500 690.500,314 C684,309 680,304.500 677.500,300.500" fill="none" stroke="#d8d0e2" stroke-width="0.9"/>
<path d="M608,309.500 C613,301 623,295.500 634,296 C638,297 641,299.500 641.700,302 C636,303 632,306 626,308 C620,309.500 613,308 608,309.500Z" fill="#54397c"/>
<path d="M608,309.500 C613,301 623,295.500 634,296" fill="none" stroke="#2a1a44" stroke-width="1.200"/>
<ellipse cx="626.500" cy="302" rx="8" ry="6" fill="#2d1d49"/><ellipse cx="628" cy="298.500" rx="3.500" ry="1.500" fill="#9a8abc"/>
<path d="M686.800,294 C692,288 700,284.500 709,285 C714,286 718,289.500 719.400,293.500 C713,292.500 708,295.500 702,296.500 C697,297 691,295 686.800,294Z" fill="#54397c"/>
<path d="M686.800,294 C692,288 700,284.500 709,285 C714,286 718,289.500 719.400,293.500" fill="none" stroke="#2a1a44" stroke-width="1.200"/>
<ellipse cx="703.800" cy="291" rx="8.500" ry="5.800" fill="#2d1d49"/><ellipse cx="705" cy="287.800" rx="3.500" ry="1.500" fill="#9a8abc"/>
<rect x="670.300" y="287" width="5.200" height="5.600" fill="#fff" stroke="#222" stroke-width="1.200"/>
<rect x="660.700" y="296.500" width="3.600" height="4.600" fill="#d8d0d8" stroke="#444" stroke-width="0.8" transform="rotate(15 662.500 298.800)"/>
<path d="M561,565.500 C567,567 573,570 575.500,574.500 C576.500,578 574,581 571,582 C575,586 577,591 576.500,595 C576,598.500 573,600.500 570.500,601 C571,605 569.500,609 566,611.500 C563,613 560,613.500 557.500,613.500 C557,616 554,618.500 550,619.500 L531,621 L531,565Z" fill="#8e8e8e" clip-path="url(#shc)"/>
<clipPath id="lhc"><path d="M480.0,660.0 C468.0,660.0 449.7,658.3 443.6,655.0 C437.5,651.7 443.5,645.5 443.6,640.0 C443.8,634.5 444.1,627.1 444.5,622.0 C444.9,616.9 445.3,613.1 445.7,609.4 C446.1,605.7 446.4,603.2 447.0,600.0 C447.6,596.8 448.4,593.0 449.0,590.0 C449.6,587.0 449.9,584.5 450.5,582.0 C451.1,579.5 451.9,577.1 452.7,574.7 C453.5,572.3 453.2,569.6 455.4,567.8 C457.6,566.0 462.3,565.2 466.0,564.0 C469.7,562.8 474.0,561.9 477.7,560.8 C481.4,559.7 484.5,558.4 488.0,557.3 C491.5,556.1 495.5,554.8 498.5,553.9 C501.5,553.0 503.4,552.5 506.0,552.0 C508.6,551.5 511.1,551.0 513.8,551.0 C516.5,551.0 519.2,551.5 522.0,552.0 C524.8,552.5 527.6,553.1 530.4,553.9 C533.2,554.6 536.2,555.6 539.0,556.5 C541.8,557.4 544.5,558.6 547.0,559.4 C549.5,560.2 551.7,560.8 554.0,561.5 C556.3,562.2 558.5,562.6 561.0,563.6 C563.5,564.6 567.3,566.2 569.3,567.8 C571.3,569.4 572.8,571.7 572.8,573.3 C572.8,574.9 570.9,576.6 569.3,577.5 C567.7,578.4 563.2,577.7 563.0,578.6 C562.8,579.5 566.5,581.5 568.0,583.0 C569.5,584.5 571.1,585.9 572.0,587.5 C572.9,589.1 574.0,591.2 573.5,592.8 C573.0,594.4 570.6,596.0 569.3,597.0 C568.0,598.0 565.8,597.4 565.5,598.5 C565.2,599.6 567.5,602.2 567.2,603.9 C567.0,605.6 565.7,607.6 563.8,608.8 C561.9,609.9 557.6,609.7 556.0,610.5 C554.4,611.3 555.5,612.6 554.0,613.6 C552.5,614.6 549.3,615.8 547.0,616.4 C544.7,617.0 542.3,617.3 540.0,617.5 C537.7,617.7 535.2,617.5 533.0,617.8 C530.8,618.1 528.8,618.8 527.0,619.5 C525.2,620.2 523.5,620.4 522.0,622.0 C520.5,623.6 519.0,626.0 518.0,629.0 C517.0,632.0 516.3,635.7 515.9,640.0 C515.5,644.3 521.5,651.7 515.5,655.0 C509.5,658.3 492.0,660.0 480.0,660.0Z"/></clipPath>
<path d="M480.0,660.0 C468.0,660.0 449.7,658.3 443.6,655.0 C437.5,651.7 443.5,645.5 443.6,640.0 C443.8,634.5 444.1,627.1 444.5,622.0 C444.9,616.9 445.3,613.1 445.7,609.4 C446.1,605.7 446.4,603.2 447.0,600.0 C447.6,596.8 448.4,593.0 449.0,590.0 C449.6,587.0 449.9,584.5 450.5,582.0 C451.1,579.5 451.9,577.1 452.7,574.7 C453.5,572.3 453.2,569.6 455.4,567.8 C457.6,566.0 462.3,565.2 466.0,564.0 C469.7,562.8 474.0,561.9 477.7,560.8 C481.4,559.7 484.5,558.4 488.0,557.3 C491.5,556.1 495.5,554.8 498.5,553.9 C501.5,553.0 503.4,552.5 506.0,552.0 C508.6,551.5 511.1,551.0 513.8,551.0 C516.5,551.0 519.2,551.5 522.0,552.0 C524.8,552.5 527.6,553.1 530.4,553.9 C533.2,554.6 536.2,555.6 539.0,556.5 C541.8,557.4 544.5,558.6 547.0,559.4 C549.5,560.2 551.7,560.8 554.0,561.5 C556.3,562.2 558.5,562.6 561.0,563.6 C563.5,564.6 567.3,566.2 569.3,567.8 C571.3,569.4 572.8,571.7 572.8,573.3 C572.8,574.9 570.9,576.6 569.3,577.5 C567.7,578.4 563.2,577.7 563.0,578.6 C562.8,579.5 566.5,581.5 568.0,583.0 C569.5,584.5 571.1,585.9 572.0,587.5 C572.9,589.1 574.0,591.2 573.5,592.8 C573.0,594.4 570.6,596.0 569.3,597.0 C568.0,598.0 565.8,597.4 565.5,598.5 C565.2,599.6 567.5,602.2 567.2,603.9 C567.0,605.6 565.7,607.6 563.8,608.8 C561.9,609.9 557.6,609.7 556.0,610.5 C554.4,611.3 555.5,612.6 554.0,613.6 C552.5,614.6 549.3,615.8 547.0,616.4 C544.7,617.0 542.3,617.3 540.0,617.5 C537.7,617.7 535.2,617.5 533.0,617.8 C530.8,618.1 528.8,618.8 527.0,619.5 C525.2,620.2 523.5,620.4 522.0,622.0 C520.5,623.6 519.0,626.0 518.0,629.0 C517.0,632.0 516.3,635.7 515.9,640.0 C515.5,644.3 521.5,651.7 515.5,655.0 C509.5,658.3 492.0,660.0 480.0,660.0Z" fill="#f3b274"/>
<g clip-path="url(#lhc)">
<path d="M440,640 L440,585 C448,578 452,574 455,568 C458,574 456,582 460,588 C462,594 468,598 470,604 C472,612 470,618 474,624 C478,630 482,634 484,640Z" fill="#fbc88e"/>
<path d="M500,622 C508,620 516,622 524,620 L520,640 L498,640 C500,634 502,628 500,622Z" fill="#c99868"/>
</g>
<path d="M480.0,660.0 C468.0,660.0 449.7,658.3 443.6,655.0 C437.5,651.7 443.5,645.5 443.6,640.0 C443.8,634.5 444.1,627.1 444.5,622.0 C444.9,616.9 445.3,613.1 445.7,609.4 C446.1,605.7 446.4,603.2 447.0,600.0 C447.6,596.8 448.4,593.0 449.0,590.0 C449.6,587.0 449.9,584.5 450.5,582.0 C451.1,579.5 451.9,577.1 452.7,574.7 C453.5,572.3 453.2,569.6 455.4,567.8 C457.6,566.0 462.3,565.2 466.0,564.0 C469.7,562.8 474.0,561.9 477.7,560.8 C481.4,559.7 484.5,558.4 488.0,557.3 C491.5,556.1 495.5,554.8 498.5,553.9 C501.5,553.0 503.4,552.5 506.0,552.0 C508.6,551.5 511.1,551.0 513.8,551.0 C516.5,551.0 519.2,551.5 522.0,552.0 C524.8,552.5 527.6,553.1 530.4,553.9 C533.2,554.6 536.2,555.6 539.0,556.5 C541.8,557.4 544.5,558.6 547.0,559.4 C549.5,560.2 551.7,560.8 554.0,561.5 C556.3,562.2 558.5,562.6 561.0,563.6 C563.5,564.6 567.3,566.2 569.3,567.8 C571.3,569.4 572.8,571.7 572.8,573.3 C572.8,574.9 570.9,576.6 569.3,577.5 C567.7,578.4 563.2,577.7 563.0,578.6 C562.8,579.5 566.5,581.5 568.0,583.0 C569.5,584.5 571.1,585.9 572.0,587.5 C572.9,589.1 574.0,591.2 573.5,592.8 C573.0,594.4 570.6,596.0 569.3,597.0 C568.0,598.0 565.8,597.4 565.5,598.5 C565.2,599.6 567.5,602.2 567.2,603.9 C567.0,605.6 565.7,607.6 563.8,608.8 C561.9,609.9 557.6,609.7 556.0,610.5 C554.4,611.3 555.5,612.6 554.0,613.6 C552.5,614.6 549.3,615.8 547.0,616.4 C544.7,617.0 542.3,617.3 540.0,617.5 C537.7,617.7 535.2,617.5 533.0,617.8 C530.8,618.1 528.8,618.8 527.0,619.5 C525.2,620.2 523.5,620.4 522.0,622.0 C520.5,623.6 519.0,626.0 518.0,629.0 C517.0,632.0 516.3,635.7 515.9,640.0 C515.5,644.3 521.5,651.7 515.5,655.0 C509.5,658.3 492.0,660.0 480.0,660.0Z" fill="none" stroke="#6a4a2c" stroke-width="0.5"/>
<path d="M463.800,577.500 C474,574 484,571 494,567.800 C505,565.500 515,564.500 525,565 C533,567 540,569.500 547,572.600 C552,575 557,577 563,578.600 M472,595.600 C481,592.500 490,590 498.500,587 C506,584.500 512,582.500 519,581.700 C527,583 534,585 541.600,587 C550,590.500 558,594.500 565.500,598.500 M486,612 C494,609.500 501,607.500 508,605 C513,603 517,601.500 522,600.400 C529,601.500 535,603 541.600,605 C546,606.800 551,608.800 556,610.500" fill="none" stroke="#805630" stroke-width="1.100"/>
<clipPath id="rhc"><path d="M870.0,660.0 C882.2,660.0 899.8,658.3 905.8,655.0 C911.8,651.7 905.8,645.5 905.8,640.0 C905.8,634.5 905.6,627.1 905.5,622.0 C905.4,616.9 905.2,612.7 905.0,609.4 C904.8,606.1 904.5,604.3 904.2,602.0 C903.9,599.7 903.6,597.6 903.0,595.6 C902.4,593.6 901.2,591.9 900.5,590.0 C899.8,588.1 899.2,586.2 898.9,584.4 C898.6,582.6 898.7,580.9 898.5,579.0 C898.3,577.1 898.4,575.4 897.5,573.3 C896.6,571.2 895.2,567.9 893.3,566.4 C891.4,564.9 888.5,564.7 886.0,564.0 C883.5,563.3 881.0,563.1 878.0,562.2 C875.0,561.3 871.5,559.6 868.0,558.5 C864.5,557.4 860.7,556.3 857.2,555.3 C853.7,554.3 850.2,553.2 847.0,552.5 C843.8,551.8 840.6,551.1 837.8,551.0 C835.0,550.9 832.5,551.5 830.0,552.0 C827.5,552.5 825.5,553.1 822.5,553.9 C819.5,554.6 815.5,555.6 812.0,556.5 C808.5,557.4 805.0,558.5 801.7,559.4 C798.4,560.3 795.2,561.1 792.0,562.0 C788.8,562.9 784.6,563.3 782.2,565.0 C779.8,566.7 777.9,569.8 777.4,572.0 C776.9,574.2 778.1,576.9 779.4,578.2 C780.7,579.5 785.2,578.6 785.0,579.6 C784.8,580.6 779.5,582.4 778.0,584.4 C776.5,586.4 775.8,589.5 776.0,591.4 C776.2,593.2 777.8,594.6 779.0,595.5 C780.2,596.4 782.5,596.1 783.0,597.0 C783.5,597.9 782.0,599.5 782.2,601.0 C782.4,602.5 783.1,604.7 784.0,606.0 C784.9,607.3 786.1,608.2 787.8,608.8 C789.5,609.3 792.9,608.9 794.0,609.4 C795.1,609.9 793.4,610.8 794.7,612.0 C796.0,613.2 798.8,615.5 801.7,616.4 C804.6,617.3 808.8,617.3 812.0,617.5 C815.2,617.7 818.5,617.5 821.0,617.8 C823.5,618.0 825.3,618.1 826.7,619.0 C828.1,619.9 828.7,621.5 829.4,623.3 C830.1,625.1 830.6,627.2 831.0,630.0 C831.4,632.8 831.8,635.8 832.0,640.0 C832.2,644.2 826.2,651.7 832.5,655.0 C838.8,658.3 857.8,660.0 870.0,660.0Z"/></clipPath>
<path d="M870.0,660.0 C882.2,660.0 899.8,658.3 905.8,655.0 C911.8,651.7 905.8,645.5 905.8,640.0 C905.8,634.5 905.6,627.1 905.5,622.0 C905.4,616.9 905.2,612.7 905.0,609.4 C904.8,606.1 904.5,604.3 904.2,602.0 C903.9,599.7 903.6,597.6 903.0,595.6 C902.4,593.6 901.2,591.9 900.5,590.0 C899.8,588.1 899.2,586.2 898.9,584.4 C898.6,582.6 898.7,580.9 898.5,579.0 C898.3,577.1 898.4,575.4 897.5,573.3 C896.6,571.2 895.2,567.9 893.3,566.4 C891.4,564.9 888.5,564.7 886.0,564.0 C883.5,563.3 881.0,563.1 878.0,562.2 C875.0,561.3 871.5,559.6 868.0,558.5 C864.5,557.4 860.7,556.3 857.2,555.3 C853.7,554.3 850.2,553.2 847.0,552.5 C843.8,551.8 840.6,551.1 837.8,551.0 C835.0,550.9 832.5,551.5 830.0,552.0 C827.5,552.5 825.5,553.1 822.5,553.9 C819.5,554.6 815.5,555.6 812.0,556.5 C808.5,557.4 805.0,558.5 801.7,559.4 C798.4,560.3 795.2,561.1 792.0,562.0 C788.8,562.9 784.6,563.3 782.2,565.0 C779.8,566.7 777.9,569.8 777.4,572.0 C776.9,574.2 778.1,576.9 779.4,578.2 C780.7,579.5 785.2,578.6 785.0,579.6 C784.8,580.6 779.5,582.4 778.0,584.4 C776.5,586.4 775.8,589.5 776.0,591.4 C776.2,593.2 777.8,594.6 779.0,595.5 C780.2,596.4 782.5,596.1 783.0,597.0 C783.5,597.9 782.0,599.5 782.2,601.0 C782.4,602.5 783.1,604.7 784.0,606.0 C784.9,607.3 786.1,608.2 787.8,608.8 C789.5,609.3 792.9,608.9 794.0,609.4 C795.1,609.9 793.4,610.8 794.7,612.0 C796.0,613.2 798.8,615.5 801.7,616.4 C804.6,617.3 808.8,617.3 812.0,617.5 C815.2,617.7 818.5,617.5 821.0,617.8 C823.5,618.0 825.3,618.1 826.7,619.0 C828.1,619.9 828.7,621.5 829.4,623.3 C830.1,625.1 830.6,627.2 831.0,630.0 C831.4,632.8 831.8,635.8 832.0,640.0 C832.2,644.2 826.2,651.7 832.5,655.0 C838.8,658.3 857.8,660.0 870.0,660.0Z" fill="#f3b274"/>
<g clip-path="url(#rhc)">
<path d="M897.500,573.300 L898.900,584.400 L903,595.600 L905,609.400 L910,640 L875,640 C877,632 878,626 878,623.300 C880,619 883,616 885,615 C887,612 888,609 887.800,606.700 C885,604 884,602 885,601 C888,597 892,594 893.300,592.800 C896,587 897,580 897.500,573.300Z" fill="#c99868"/>
<path d="M826.700,619 C832,624 840,628 849,631.700 C858,634 868,635 876,635.500 L876,640 L832,640Z" fill="#c99868"/>
</g>
<path d="M870.0,660.0 C882.2,660.0 899.8,658.3 905.8,655.0 C911.8,651.7 905.8,645.5 905.8,640.0 C905.8,634.5 905.6,627.1 905.5,622.0 C905.4,616.9 905.2,612.7 905.0,609.4 C904.8,606.1 904.5,604.3 904.2,602.0 C903.9,599.7 903.6,597.6 903.0,595.6 C902.4,593.6 901.2,591.9 900.5,590.0 C899.8,588.1 899.2,586.2 898.9,584.4 C898.6,582.6 898.7,580.9 898.5,579.0 C898.3,577.1 898.4,575.4 897.5,573.3 C896.6,571.2 895.2,567.9 893.3,566.4 C891.4,564.9 888.5,564.7 886.0,564.0 C883.5,563.3 881.0,563.1 878.0,562.2 C875.0,561.3 871.5,559.6 868.0,558.5 C864.5,557.4 860.7,556.3 857.2,555.3 C853.7,554.3 850.2,553.2 847.0,552.5 C843.8,551.8 840.6,551.1 837.8,551.0 C835.0,550.9 832.5,551.5 830.0,552.0 C827.5,552.5 825.5,553.1 822.5,553.9 C819.5,554.6 815.5,555.6 812.0,556.5 C808.5,557.4 805.0,558.5 801.7,559.4 C798.4,560.3 795.2,561.1 792.0,562.0 C788.8,562.9 784.6,563.3 782.2,565.0 C779.8,566.7 777.9,569.8 777.4,572.0 C776.9,574.2 778.1,576.9 779.4,578.2 C780.7,579.5 785.2,578.6 785.0,579.6 C784.8,580.6 779.5,582.4 778.0,584.4 C776.5,586.4 775.8,589.5 776.0,591.4 C776.2,593.2 777.8,594.6 779.0,595.5 C780.2,596.4 782.5,596.1 783.0,597.0 C783.5,597.9 782.0,599.5 782.2,601.0 C782.4,602.5 783.1,604.7 784.0,606.0 C784.9,607.3 786.1,608.2 787.8,608.8 C789.5,609.3 792.9,608.9 794.0,609.4 C795.1,609.9 793.4,610.8 794.7,612.0 C796.0,613.2 798.8,615.5 801.7,616.4 C804.6,617.3 808.8,617.3 812.0,617.5 C815.2,617.7 818.5,617.5 821.0,617.8 C823.5,618.0 825.3,618.1 826.7,619.0 C828.1,619.9 828.7,621.5 829.4,623.3 C830.1,625.1 830.6,627.2 831.0,630.0 C831.4,632.8 831.8,635.8 832.0,640.0 C832.2,644.2 826.2,651.7 832.5,655.0 C838.8,658.3 857.8,660.0 870.0,660.0Z" fill="none" stroke="#6a4a2c" stroke-width="0.5"/>
<path d="M785,579.600 C792,576.500 799,573.500 805.800,570.600 C811,568 817,566 822.500,565 C829,565 836,565.500 843.300,566.400 C852,568.500 860,571 868.300,573.300 C874,575 880,576.800 885,578.200 M783,597 C789,594 795,591.500 801.700,588.600 C810,585.500 818,583.500 826.700,582.400 C833,583.500 839,585 846,587.200 C853,589.500 859,592 865.600,594.200 C870,595.200 874,595.600 878,595.600 M794,609.400 C799,607 804,604.500 808.600,602.500 C814,600.800 819,599.900 825.300,599.700 C831,601 837,603 843.300,605.300 C850,607.500 857,610 864.200,612.200" fill="none" stroke="#805630" stroke-width="1.100"/>
</g></svg>
<div id="title"></div>
<div class="t " style="left:179px;top:2px;font-size:10.5px;font-weight:bold;color:#fff;letter-spacing:0.364px;">CorelDRAW X3 - [D:\TEMP\_MM DISCS\Corel X3\3_4\CAT_FISH.cdr]</div>
<div class="wbtn" style="left:1071px;top:2px;"></div>
<div class="wbtn" style="left:1071px;top:23px;"></div>
<div class="wbtn" style="left:1086px;top:2px;"></div>
<div class="wbtn" style="left:1086px;top:23px;"></div>
<div class="wbtn" style="left:1103px;top:2px;"></div>
<div class="wbtn" style="left:1103px;top:23px;"></div>
<div class="hline" style="left:160px;top:17px;width:960px;background:#fff;box-shadow:none;"></div>
<div class="grip2" style="left:162px;top:19px;height:20px;"></div><div class="grip2" style="left:165px;top:19px;height:20px;"></div>
<div class="t menu" style="left:192.5px;top:24px;font-size:10.5px;letter-spacing:-0.203px;"><u>Ф</u>айл</div>
<div class="t menu" style="left:234.5px;top:24px;font-size:10.5px;letter-spacing:-0.164px;"><u>П</u>равка</div>
<div class="t menu" style="left:287px;top:24px;font-size:10.5px;letter-spacing:-0.661px;"><u>В</u>ид</div>
<div class="t menu" style="left:322.5px;top:24px;font-size:10.5px;letter-spacing:-0.050px;"><u>М</u>акет</div>
<div class="t menu" style="left:371px;top:24px;font-size:10.5px;letter-spacing:0.047px;"><u>У</u>порядочить</div>
<div class="t menu" style="left:452.5px;top:24px;font-size:10.5px;letter-spacing:-0.393px;"><u>Э</u>ффекты</div>
<div class="t menu" style="left:515px;top:24px;font-size:10.5px;letter-spacing:-0.117px;">Р<u>а</u>стровые изображения</div>
<div class="t menu" style="left:651px;top:24px;font-size:10.5px;letter-spacing:-0.087px;"><u>Т</u>екст</div>
<div class="t menu" style="left:695.5px;top:24px;font-size:10.5px;letter-spacing:-0.134px;"><u>И</u>нструменты</div>
<div class="t menu" style="left:777.5px;top:24px;font-size:10.5px;letter-spacing:-0.102px;"><u>О</u>кно</div>
<div class="t menu" style="left:819.5px;top:24px;font-size:10.5px;letter-spacing:-0.100px;"><u>С</u>правка</div>
<div class="hline" style="left:160px;top:39px;width:960px;"></div>
<div class="grip2" style="left:162px;top:42px;height:26px;"></div><div class="grip2" style="left:165px;top:42px;height:26px;"></div>
<div class="hline" style="left:160px;top:69px;width:519px;"></div>
<div class="vline" style="left:251px;top:45px;height:21px;"></div>
<div class="vline" style="left:316px;top:45px;height:21px;"></div>
<div class="vline" style="left:389px;top:45px;height:21px;"></div>
<div class="vline" style="left:435px;top:45px;height:21px;"></div>
<div class="vline" style="left:494px;top:45px;height:21px;"></div>
<div class="vline" style="left:582px;top:42px;height:27px;"></div>
<div class="abs" style="left:501px;top:47px;width:78px;height:17px;background:#fff;border:1px solid #eceae4;box-sizing:border-box;"></div>
<div class="t " style="left:506px;top:49.5px;font-size:10.5px;letter-spacing:-0.219px;">400%</div>
<div class="abs" style="left:565px;top:48px;width:14px;height:16px;background:#d4d0c8;"></div>
<div class="grip2" style="left:162px;top:72px;height:26px;"></div><div class="grip2" style="left:165px;top:72px;height:26px;"></div>
<div class="abs" style="left:199px;top:77px;width:93px;height:18px;background:#fff;border:1px solid #eceae4;box-sizing:border-box;"></div>
<div class="t " style="left:201px;top:80px;font-size:10.5px;letter-spacing:-0.148px;">Однородный</div>
<div class="abs" style="left:277px;top:78px;width:14px;height:16px;background:#d4d0c8;"></div>
<div class="abs" style="left:305px;top:77px;width:90px;height:18px;background:#fff;border:1px solid #9a968e;box-sizing:border-box;"></div>
<div class="t " style="left:308.3px;top:80px;font-size:10.5px;letter-spacing:-0.415px;">Если темнее</div>
<div class="abs" style="left:380px;top:78px;width:14px;height:16px;background:#d4d0c8;box-shadow:inset 1px 1px 0 #808080;"></div>
<div class="vline" style="left:192px;top:75px;height:21px;"></div>
<div class="vline" style="left:299px;top:75px;height:21px;"></div>
<div class="vline" style="left:402px;top:75px;height:21px;"></div>
<div class="vline" style="left:519px;top:75px;height:21px;"></div>
<div class="vline" style="left:607px;top:75px;height:21px;"></div>
<div class="vline" style="left:632px;top:75px;height:21px;"></div>
<div class="vline" style="left:678px;top:71px;height:28px;"></div>
<div class="abs" style="left:479px;top:77px;width:34px;height:18px;background:#fff;border:1px solid #eceae4;box-sizing:border-box;"></div>
<div class="t " style="left:485px;top:80px;font-size:10.5px;letter-spacing:-0.844px;">29</div>
<div class="abs" style="left:527px;top:77px;width:74px;height:18px;background:#fff;border:1px solid #eceae4;box-sizing:border-box;"></div>
<div class="abs" style="left:531px;top:79px;width:11px;height:13px;background:linear-gradient(135deg,#9a9ab8 0%,#3a3a68 45%,#1a1a3a 100%);"></div>
<div class="t " style="left:546.5px;top:79px;font-size:10.5px;letter-spacing:-1.198px;">Все</div>
<div class="abs" style="left:586px;top:78px;width:14px;height:16px;background:#d4d0c8;"></div>
<div class="abs" style="left:428px;top:78px;width:42px;height:16px;box-shadow:inset 1px 1px 0 #fff, inset -1px -1px 0 #b0aca4;"></div>
<div class="abs" style="left:429px;top:78px;width:10px;height:2px;background:#203060;"></div>
<div class="abs" style="left:437px;top:79px;width:5px;height:15px;background:linear-gradient(90deg,#fff,#8890b0 40%,#203060 60%,#fff);border:1px solid #606880;box-sizing:border-box;"></div>
<div class="hline" style="left:160px;top:98px;width:519px;box-shadow:none;"></div>
<div class="hline" style="left:160px;top:100px;width:960px;background:#808080;box-shadow:none;"></div>
<div class="hline" style="left:160px;top:101px;width:25px;background:#fff;box-shadow:0 1px 0 #808080;"></div>
<div class="hline" style="left:160px;top:104px;width:25px;background:#fff;box-shadow:0 1px 0 #808080;"></div>
<div class="vline" style="left:185px;top:100px;height:551px;background:#808080;box-shadow:none;"></div>
<div class="hline" style="left:161px;top:336px;width:23px;"></div>
<div class="hline" style="left:161px;top:362px;width:23px;"></div>
<div class="abs" style="left:161px;top:339px;width:23px;height:21px;background:#ebe9e4;box-shadow:inset 1px 1px 0 #808080, inset -1px -1px 0 #fff;"></div>
<div class="hline" style="left:160px;top:447px;width:25px;"></div>
<div class="abs" style="left:186px;top:100px;width:888px;height:19px;background:#d4d0c8;box-shadow:inset 0 1px 0 #808080;"></div>
<div class="abs" style="left:186px;top:100px;width:18px;height:551px;background:#d4d0c8;"></div>
<div class="abs" style="left:203px;top:118px;width:871px;height:1px;background:#404040;"></div>
<div class="abs" style="left:203px;top:118px;width:1px;height:518px;background:#404040;"></div>
<div class="abs" style="left:203px;top:635px;width:433px;height:1px;background:#404040;"></div>
<svg width="1280" height="720" viewBox="0 0 1280 720" shape-rendering="crispEdges"><rect x="205" y="110" width="1" height="8" fill="#000"/><rect x="210" y="115" width="1" height="3" fill="#000"/><rect x="216" y="115" width="1" height="3" fill="#000"/><rect x="221" y="115" width="1" height="3" fill="#000"/><rect x="227" y="115" width="1" height="3" fill="#000"/><rect x="232" y="115" width="1" height="3" fill="#000"/><rect x="238" y="115" width="1" height="3" fill="#000"/><rect x="244" y="115" width="1" height="3" fill="#000"/><rect x="249" y="115" width="1" height="3" fill="#000"/><rect x="255" y="115" width="1" height="3" fill="#000"/><rect x="260" y="110" width="1" height="8" fill="#000"/><rect x="266" y="115" width="1" height="3" fill="#000"/><rect x="271" y="115" width="1" height="3" fill="#000"/><rect x="277" y="115" width="1" height="3" fill="#000"/><rect x="282" y="115" width="1" height="3" fill="#000"/><rect x="288" y="115" width="1" height="3" fill="#000"/><rect x="294" y="115" width="1" height="3" fill="#000"/><rect x="299" y="115" width="1" height="3" fill="#000"/><rect x="305" y="115" width="1" height="3" fill="#000"/><rect x="310" y="115" width="1" height="3" fill="#000"/><rect x="316" y="110" width="1" height="8" fill="#000"/><rect x="321" y="115" width="1" height="3" fill="#000"/><rect x="327" y="115" width="1" height="3" fill="#000"/><rect x="332" y="115" width="1" height="3" fill="#000"/><rect x="338" y="115" width="1" height="3" fill="#000"/><rect x="344" y="115" width="1" height="3" fill="#000"/><rect x="349" y="115" width="1" height="3" fill="#000"/><rect x="355" y="115" width="1" height="3" fill="#000"/><rect x="360" y="115" width="1" height="3" fill="#000"/><rect x="366" y="115" width="1" height="3" fill="#000"/><rect x="371" y="110" width="1" height="8" fill="#000"/><rect x="377" y="115" width="1" height="3" fill="#000"/><rect x="383" y="115" width="1" height="3" fill="#000"/><rect x="388" y="115" width="1" height="3" fill="#000"/><rect x="394" y="115" width="1" height="3" fill="#000"/><rect x="399" y="115" width="1" height="3" fill="#000"/><rect x="405" y="115" width="1" height="3" fill="#000"/><rect x="410" y="115" width="1" height="3" fill="#000"/><rect x="416" y="115" width="1" height="3" fill="#000"/><rect x="421" y="115" width="1" height="3" fill="#000"/><rect x="427" y="110" width="1" height="8" fill="#000"/><rect x="433" y="115" width="1" height="3" fill="#000"/><rect x="438" y="115" width="1" height="3" fill="#000"/><rect x="444" y="115" width="1" height="3" fill="#000"/><rect x="449" y="115" width="1" height="3" fill="#000"/><rect x="455" y="115" width="1" height="3" fill="#000"/><rect x="460" y="115" width="1" height="3" fill="#000"/><rect x="466" y="115" width="1" height="3" fill="#000"/><rect x="471" y="115" width="1" height="3" fill="#000"/><rect x="477" y="115" width="1" height="3" fill="#000"/><rect x="483" y="110" width="1" height="8" fill="#000"/><rect x="488" y="115" width="1" height="3" fill="#000"/><rect x="494" y="115" width="1" height="3" fill="#000"/><rect x="499" y="115" width="1" height="3" fill="#000"/><rect x="505" y="115" width="1" height="3" fill="#000"/><rect x="510" y="115" width="1" height="3" fill="#000"/><rect x="516" y="115" width="1" height="3" fill="#000"/><rect x="522" y="115" width="1" height="3" fill="#000"/><rect x="527" y="115" width="1" height="3" fill="#000"/><rect x="533" y="115" width="1" height="3" fill="#000"/><rect x="538" y="110" width="1" height="8" fill="#000"/><rect x="544" y="115" width="1" height="3" fill="#000"/><rect x="549" y="115" width="1" height="3" fill="#000"/><rect x="555" y="115" width="1" height="3" fill="#000"/><rect x="560" y="115" width="1" height="3" fill="#000"/><rect x="566" y="115" width="1" height="3" fill="#000"/><rect x="572" y="115" width="1" height="3" fill="#000"/><rect x="577" y="115" width="1" height="3" fill="#000"/><rect x="583" y="115" width="1" height="3" fill="#000"/><rect x="588" y="115" width="1" height="3" fill="#000"/><rect x="594" y="110" width="1" height="8" fill="#000"/><rect x="599" y="115" width="1" height="3" fill="#000"/><rect x="605" y="115" width="1" height="3" fill="#000"/><rect x="610" y="115" width="1" height="3" fill="#000"/><rect x="616" y="115" width="1" height="3" fill="#000"/><rect x="622" y="115" width="1" height="3" fill="#000"/><rect x="627" y="115" width="1" height="3" fill="#000"/><rect x="633" y="115" width="1" height="3" fill="#000"/><rect x="638" y="115" width="1" height="3" fill="#000"/><rect x="644" y="115" width="1" height="3" fill="#000"/><rect x="649" y="110" width="1" height="8" fill="#000"/><rect x="655" y="115" width="1" height="3" fill="#000"/><rect x="661" y="115" width="1" height="3" fill="#000"/><rect x="666" y="115" width="1" height="3" fill="#000"/><rect x="672" y="115" width="1" height="3" fill="#000"/><rect x="677" y="115" width="1" height="3" fill="#000"/><rect x="683" y="115" width="1" height="3" fill="#000"/><rect x="688" y="115" width="1" height="3" fill="#000"/><rect x="694" y="115" width="1" height="3" fill="#000"/><rect x="699" y="115" width="1" height="3" fill="#000"/><rect x="705" y="110" width="1" height="8" fill="#000"/><rect x="711" y="115" width="1" height="3" fill="#000"/><rect x="716" y="115" width="1" height="3" fill="#000"/><rect x="722" y="115" width="1" height="3" fill="#000"/><rect x="727" y="115" width="1" height="3" fill="#000"/><rect x="733" y="115" width="1" height="3" fill="#000"/><rect x="738" y="115" width="1" height="3" fill="#000"/><rect x="744" y="115" width="1" height="3" fill="#000"/><rect x="749" y="115" width="1" height="3" fill="#000"/><rect x="755" y="115" width="1" height="3" fill="#000"/><rect x="761" y="110" width="1" height="8" fill="#000"/><rect x="766" y="115" width="1" height="3" fill="#000"/><rect x="772" y="115" width="1" height="3" fill="#000"/><rect x="777" y="115" width="1" height="3" fill="#000"/><rect x="783" y="115" width="1" height="3" fill="#000"/><rect x="788" y="115" width="1" height="3" fill="#000"/><rect x="794" y="115" width="1" height="3" fill="#000"/><rect x="800" y="115" width="1" height="3" fill="#000"/><rect x="805" y="115" width="1" height="3" fill="#000"/><rect x="811" y="115" width="1" height="3" fill="#000"/><rect x="816" y="110" width="1" height="8" fill="#000"/><rect x="822" y="115" width="1" height="3" fill="#000"/><rect x="827" y="115" width="1" height="3" fill="#000"/><rect x="833" y="115" width="1" height="3" fill="#000"/><rect x="838" y="115" width="1" height="3" fill="#000"/><rect x="844" y="115" width="1" height="3" fill="#000"/><rect x="850" y="115" width="1" height="3" fill="#000"/><rect x="855" y="115" width="1" height="3" fill="#000"/><rect x="861" y="115" width="1" height="3" fill="#000"/><rect x="866" y="115" width="1" height="3" fill="#000"/><rect x="872" y="110" width="1" height="8" fill="#000"/><rect x="877" y="115" width="1" height="3" fill="#000"/><rect x="883" y="115" width="1" height="3" fill="#000"/><rect x="888" y="115" width="1" height="3" fill="#000"/><rect x="894" y="115" width="1" height="3" fill="#000"/><rect x="900" y="115" width="1" height="3" fill="#000"/><rect x="905" y="115" width="1" height="3" fill="#000"/><rect x="911" y="115" width="1" height="3" fill="#000"/><rect x="916" y="115" width="1" height="3" fill="#000"/><rect x="922" y="115" width="1" height="3" fill="#000"/><rect x="927" y="110" width="1" height="8" fill="#000"/><rect x="933" y="115" width="1" height="3" fill="#000"/><rect x="939" y="115" width="1" height="3" fill="#000"/><rect x="944" y="115" width="1" height="3" fill="#000"/><rect x="950" y="115" width="1" height="3" fill="#000"/><rect x="955" y="115" width="1" height="3" fill="#000"/><rect x="961" y="115" width="1" height="3" fill="#000"/><rect x="966" y="115" width="1" height="3" fill="#000"/><rect x="972" y="115" width="1" height="3" fill="#000"/><rect x="977" y="115" width="1" height="3" fill="#000"/><rect x="983" y="110" width="1" height="8" fill="#000"/><rect x="989" y="115" width="1" height="3" fill="#000"/><rect x="994" y="115" width="1" height="3" fill="#000"/><rect x="1000" y="115" width="1" height="3" fill="#000"/><rect x="1005" y="115" width="1" height="3" fill="#000"/><rect x="1011" y="115" width="1" height="3" fill="#000"/><rect x="1016" y="115" width="1" height="3" fill="#000"/><rect x="1022" y="115" width="1" height="3" fill="#000"/><rect x="1027" y="115" width="1" height="3" fill="#000"/><rect x="1033" y="115" width="1" height="3" fill="#000"/><rect x="1039" y="110" width="1" height="8" fill="#000"/><rect x="1044" y="115" width="1" height="3" fill="#000"/><rect x="1050" y="115" width="1" height="3" fill="#000"/><rect x="1055" y="115" width="1" height="3" fill="#000"/><rect x="1061" y="115" width="1" height="3" fill="#000"/><rect x="1066" y="115" width="1" height="3" fill="#000"/><rect x="200" y="122" width="3" height="1" fill="#000"/><rect x="200" y="128" width="3" height="1" fill="#000"/><rect x="200" y="133" width="3" height="1" fill="#000"/><rect x="200" y="139" width="3" height="1" fill="#000"/><rect x="200" y="144" width="3" height="1" fill="#000"/><rect x="200" y="150" width="3" height="1" fill="#000"/><rect x="200" y="155" width="3" height="1" fill="#000"/><rect x="200" y="161" width="3" height="1" fill="#000"/><rect x="197" y="167" width="6" height="1" fill="#000"/><rect x="200" y="172" width="3" height="1" fill="#000"/><rect x="200" y="178" width="3" height="1" fill="#000"/><rect x="200" y="183" width="3" height="1" fill="#000"/><rect x="200" y="189" width="3" height="1" fill="#000"/><rect x="200" y="194" width="3" height="1" fill="#000"/><rect x="200" y="200" width="3" height="1" fill="#000"/><rect x="200" y="206" width="3" height="1" fill="#000"/><rect x="200" y="211" width="3" height="1" fill="#000"/><rect x="200" y="217" width="3" height="1" fill="#000"/><rect x="197" y="222" width="6" height="1" fill="#000"/><rect x="200" y="228" width="3" height="1" fill="#000"/><rect x="200" y="233" width="3" height="1" fill="#000"/><rect x="200" y="239" width="3" height="1" fill="#000"/><rect x="200" y="244" width="3" height="1" fill="#000"/><rect x="200" y="250" width="3" height="1" fill="#000"/><rect x="200" y="256" width="3" height="1" fill="#000"/><rect x="200" y="261" width="3" height="1" fill="#000"/><rect x="200" y="267" width="3" height="1" fill="#000"/><rect x="200" y="272" width="3" height="1" fill="#000"/><rect x="197" y="278" width="6" height="1" fill="#000"/><rect x="200" y="283" width="3" height="1" fill="#000"/><rect x="200" y="289" width="3" height="1" fill="#000"/><rect x="200" y="294" width="3" height="1" fill="#000"/><rect x="200" y="300" width="3" height="1" fill="#000"/><rect x="200" y="306" width="3" height="1" fill="#000"/><rect x="200" y="311" width="3" height="1" fill="#000"/><rect x="200" y="317" width="3" height="1" fill="#000"/><rect x="200" y="322" width="3" height="1" fill="#000"/><rect x="200" y="328" width="3" height="1" fill="#000"/><rect x="197" y="333" width="6" height="1" fill="#000"/><rect x="200" y="339" width="3" height="1" fill="#000"/><rect x="200" y="345" width="3" height="1" fill="#000"/><rect x="200" y="350" width="3" height="1" fill="#000"/><rect x="200" y="356" width="3" height="1" fill="#000"/><rect x="200" y="361" width="3" height="1" fill="#000"/><rect x="200" y="367" width="3" height="1" fill="#000"/><rect x="200" y="372" width="3" height="1" fill="#000"/><rect x="200" y="378" width="3" height="1" fill="#000"/><rect x="200" y="383" width="3" height="1" fill="#000"/><rect x="197" y="389" width="6" height="1" fill="#000"/><rect x="200" y="395" width="3" height="1" fill="#000"/><rect x="200" y="400" width="3" height="1" fill="#000"/><rect x="200" y="406" width="3" height="1" fill="#000"/><rect x="200" y="411" width="3" height="1" fill="#000"/><rect x="200" y="417" width="3" height="1" fill="#000"/><rect x="200" y="422" width="3" height="1" fill="#000"/><rect x="200" y="428" width="3" height="1" fill="#000"/><rect x="200" y="433" width="3" height="1" fill="#000"/><rect x="200" y="439" width="3" height="1" fill="#000"/><rect x="197" y="445" width="6" height="1" fill="#000"/><rect x="200" y="450" width="3" height="1" fill="#000"/><rect x="200" y="456" width="3" height="1" fill="#000"/><rect x="200" y="461" width="3" height="1" fill="#000"/><rect x="200" y="467" width="3" height="1" fill="#000"/><rect x="200" y="472" width="3" height="1" fill="#000"/><rect x="200" y="478" width="3" height="1" fill="#000"/><rect x="200" y="484" width="3" height="1" fill="#000"/><rect x="200" y="489" width="3" height="1" fill="#000"/><rect x="200" y="495" width="3" height="1" fill="#000"/><rect x="197" y="500" width="6" height="1" fill="#000"/><rect x="200" y="506" width="3" height="1" fill="#000"/><rect x="200" y="511" width="3" height="1" fill="#000"/><rect x="200" y="517" width="3" height="1" fill="#000"/><rect x="200" y="522" width="3" height="1" fill="#000"/><rect x="200" y="528" width="3" height="1" fill="#000"/><rect x="200" y="534" width="3" height="1" fill="#000"/><rect x="200" y="539" width="3" height="1" fill="#000"/><rect x="200" y="545" width="3" height="1" fill="#000"/><rect x="200" y="550" width="3" height="1" fill="#000"/><rect x="197" y="556" width="6" height="1" fill="#000"/><rect x="200" y="561" width="3" height="1" fill="#000"/><rect x="200" y="567" width="3" height="1" fill="#000"/><rect x="200" y="572" width="3" height="1" fill="#000"/><rect x="200" y="578" width="3" height="1" fill="#000"/><rect x="200" y="584" width="3" height="1" fill="#000"/><rect x="200" y="589" width="3" height="1" fill="#000"/><rect x="200" y="595" width="3" height="1" fill="#000"/><rect x="200" y="600" width="3" height="1" fill="#000"/><rect x="200" y="606" width="3" height="1" fill="#000"/><rect x="197" y="611" width="6" height="1" fill="#000"/><rect x="200" y="617" width="3" height="1" fill="#000"/><rect x="200" y="623" width="3" height="1" fill="#000"/><rect x="200" y="628" width="3" height="1" fill="#000"/><rect x="200" y="634" width="3" height="1" fill="#000"/><rect x="200" y="639" width="3" height="1" fill="#000"/><rect x="200" y="645" width="3" height="1" fill="#000"/></svg>
<div class="t " style="left:256.2px;top:100.5px;font-size:9px;">40</div>
<div class="t " style="left:311.8px;top:100.5px;font-size:9px;">50</div>
<div class="t " style="left:367.4px;top:100.5px;font-size:9px;">60</div>
<div class="t " style="left:423px;top:100.5px;font-size:9px;">70</div>
<div class="t " style="left:478.6px;top:100.5px;font-size:9px;">80</div>
<div class="t " style="left:534.2px;top:100.5px;font-size:9px;">90</div>
<div class="t " style="left:587.3px;top:100.5px;font-size:9px;">100</div>
<div class="t " style="left:642.9px;top:100.5px;font-size:9px;letter-spacing:0.224px;">110</div>
<div class="t " style="left:698.5px;top:100.5px;font-size:9px;">120</div>
<div class="t " style="left:754.1px;top:100.5px;font-size:9px;">130</div>
<div class="t " style="left:809.7px;top:100.5px;font-size:9px;">140</div>
<div class="t " style="left:865.3px;top:100.5px;font-size:9px;">150</div>
<div class="t " style="left:920.9px;top:100.5px;font-size:9px;">160</div>
<div class="t " style="left:976.5px;top:100.5px;font-size:9px;">170</div>
<div class="t " style="left:204.8px;top:100.5px;font-size:9px;">0</div>
<div class="t " style="left:1021px;top:100px;font-size:9px;letter-spacing:-0.423px;">миллиметры</div>
<div class="vt" style="left:188px;top:174.1px;font-size:9px;transform:rotate(-90deg);letter-spacing:-0.1px;">180</div>
<div class="vt" style="left:188px;top:229.7px;font-size:9px;transform:rotate(-90deg);letter-spacing:-0.1px;">170</div>
<div class="vt" style="left:188px;top:285.3px;font-size:9px;transform:rotate(-90deg);letter-spacing:-0.1px;">160</div>
<div class="vt" style="left:188px;top:340.9px;font-size:9px;transform:rotate(-90deg);letter-spacing:-0.1px;">150</div>
<div class="vt" style="left:188px;top:396.5px;font-size:9px;transform:rotate(-90deg);letter-spacing:-0.1px;">140</div>
<div class="vt" style="left:188px;top:452.1px;font-size:9px;transform:rotate(-90deg);letter-spacing:-0.1px;">130</div>
<div class="vt" style="left:188px;top:507.7px;font-size:9px;transform:rotate(-90deg);letter-spacing:-0.1px;">120</div>
<div class="vt" style="left:188px;top:563.3px;font-size:9px;transform:rotate(-90deg);letter-spacing:-0.1px;">110</div>
<div class="vt" style="left:188px;top:648px;font-size:9px;transform:rotate(-90deg);letter-spacing:-0.15px;">миллиметры</div>
<svg width="1280" height="720" viewBox="0 0 1280 720"><path d="M192,107 l5,5 M197,107 v0.100 M192,112 v0.100 M195,105 v0.100 M199,110 v0.100 M190,110 v0.100 M194,114 v0.100" stroke="#000" stroke-width="1.3" stroke-dasharray="1.5 1.5" fill="none"/><path d="M196,113 l3,-0.500 l-0.500,3z" fill="#000"/></svg>
<div class="track" style="left:1059px;top:119px;width:15px;height:516px;"></div>
<div class="sbtn" style="left:1059px;top:119px;width:15px;height:15px;"></div>
<div class="sbtn" style="left:1059px;top:620px;width:15px;height:15px;"></div>
<div class="sbtn" style="left:1059px;top:346px;width:15px;height:73px;"></div>
<div class="vline" style="left:1074px;top:100px;height:551px;background:#fff;box-shadow:none;"></div>
<div class="abs" style="left:1077px;top:122px;width:21px;height:134px;box-shadow:inset -1px -1px 0 #808080, inset 1px 0 0 #fff;"></div>
<div class="abs" style="left:1077px;top:257px;width:21px;height:107px;box-shadow:inset -1px -1px 0 #808080, inset 1px 0 0 #fff;"></div>
<div class="hline" style="left:1078px;top:124px;width:18px;background:#fff;box-shadow:0 1px 0 #a0a098;"></div>
<div class="hline" style="left:1078px;top:127px;width:18px;background:#fff;box-shadow:0 1px 0 #a0a098;"></div>
<div class="hline" style="left:1078px;top:130px;width:18px;background:#fff;box-shadow:0 1px 0 #a0a098;"></div>
<div class="hline" style="left:1078px;top:257px;width:18px;background:#fff;box-shadow:0 1px 0 #a0a098;"></div>
<div class="hline" style="left:1078px;top:260px;width:18px;background:#fff;box-shadow:0 1px 0 #a0a098;"></div>
<div class="vt" style="left:1091px;top:153px;font-size:10px;transform:rotate(90deg);letter-spacing:0.177px;">Диспетчер объектов</div>
<div class="vt" style="left:1091px;top:280px;font-size:10px;transform:rotate(90deg);letter-spacing:0.172px;">Преобразование</div>
<div class="vline" style="left:1098px;top:100px;height:551px;background:#808080;box-shadow:1px 0 0 #fff;"></div>
<div class="abs" style="left:1102px;top:106px;width:15px;height:15px;background:#fff;"></div>
<div class="abs" style="left:1101px;top:138px;width:17px;height:16px;background:#fff;border:1px solid #000;box-sizing:border-box;"></div>
<div class="sw" style="top:154px;height:16px;background:#4db0f5;box-shadow:inset 0 -1px 0 rgba(0,0,0,.55), inset 1px 0 0 rgba(0,0,0,.35), inset -1px 0 0 rgba(0,0,0,.35);"></div>
<div class="sw" style="top:170px;height:16px;background:#8fb0d0;box-shadow:inset 0 -1px 0 rgba(0,0,0,.55), inset 1px 0 0 rgba(0,0,0,.35), inset -1px 0 0 rgba(0,0,0,.35);"></div>
<div class="sw" style="top:186px;height:16px;background:#8094a8;box-shadow:inset 0 -1px 0 rgba(0,0,0,.55), inset 1px 0 0 rgba(0,0,0,.35), inset -1px 0 0 rgba(0,0,0,.35);"></div>
<div class="sw" style="top:202px;height:16px;background:#606d78;box-shadow:inset 0 -1px 0 rgba(0,0,0,.55), inset 1px 0 0 rgba(0,0,0,.35), inset -1px 0 0 rgba(0,0,0,.35);"></div>
<div class="sw" style="top:218px;height:16px;background:#464c50;box-shadow:inset 0 -1px 0 rgba(0,0,0,.55), inset 1px 0 0 rgba(0,0,0,.35), inset -1px 0 0 rgba(0,0,0,.35);"></div>
<div class="sw" style="top:234px;height:16px;background:#4d6b6b;box-shadow:inset 0 -1px 0 rgba(0,0,0,.55), inset 1px 0 0 rgba(0,0,0,.35), inset -1px 0 0 rgba(0,0,0,.35);"></div>
<div class="sw" style="top:250px;height:16px;background:#217a7c;box-shadow:inset 0 -1px 0 rgba(0,0,0,.55), inset 1px 0 0 rgba(0,0,0,.35), inset -1px 0 0 rgba(0,0,0,.35);"></div>
<div class="sw" style="top:266px;height:16px;background:#5d8a96;box-shadow:inset 0 -1px 0 rgba(0,0,0,.55), inset 1px 0 0 rgba(0,0,0,.35), inset -1px 0 0 rgba(0,0,0,.35);"></div>
<div class="sw" style="top:282px;height:16px;background:#1c9696;box-shadow:inset 0 -1px 0 rgba(0,0,0,.55), inset 1px 0 0 rgba(0,0,0,.35), inset -1px 0 0 rgba(0,0,0,.35);"></div>
<div class="sw" style="top:298px;height:16px;background:#1f9478;box-shadow:inset 0 -1px 0 rgba(0,0,0,.55), inset 1px 0 0 rgba(0,0,0,.35), inset -1px 0 0 rgba(0,0,0,.35);"></div>
<div class="sw" style="top:314px;height:16px;background:#18a0d0;box-shadow:inset 0 -1px 0 rgba(0,0,0,.55), inset 1px 0 0 rgba(0,0,0,.35), inset -1px 0 0 rgba(0,0,0,.35);"></div>
<div class="sw" style="top:330px;height:16px;background:#2090a8;box-shadow:inset 0 -1px 0 rgba(0,0,0,.55), inset 1px 0 0 rgba(0,0,0,.35), inset -1px 0 0 rgba(0,0,0,.35);"></div>
<div class="sw" style="top:346px;height:16px;background:#9fb5aa;box-shadow:inset 0 -1px 0 rgba(0,0,0,.55), inset 1px 0 0 rgba(0,0,0,.35), inset -1px 0 0 rgba(0,0,0,.35);"></div>
<div class="sw" style="top:362px;height:16px;background:#a5dccb;box-shadow:inset 0 0 0 1px #000, inset 0 0 0 2px #fff;"></div>
<div class="sw" style="top:378px;height:16px;background:#4dc0b0;box-shadow:inset 0 -1px 0 rgba(0,0,0,.55), inset 1px 0 0 rgba(0,0,0,.35), inset -1px 0 0 rgba(0,0,0,.35);"></div>
<div class="sw" style="top:394px;height:16px;background:#7d908a;box-shadow:inset 0 -1px 0 rgba(0,0,0,.55), inset 1px 0 0 rgba(0,0,0,.35), inset -1px 0 0 rgba(0,0,0,.35);"></div>
<div class="sw" style="top:410px;height:16px;background:#7d9272;box-shadow:inset 0 -1px 0 rgba(0,0,0,.55), inset 1px 0 0 rgba(0,0,0,.35), inset -1px 0 0 rgba(0,0,0,.35);"></div>
<div class="sw" style="top:426px;height:16px;background:#9ab272;box-shadow:inset 0 -1px 0 rgba(0,0,0,.55), inset 1px 0 0 rgba(0,0,0,.35), inset -1px 0 0 rgba(0,0,0,.35);"></div>
<div class="sw" style="top:442px;height:16px;background:#9cba94;box-shadow:inset 0 -1px 0 rgba(0,0,0,.55), inset 1px 0 0 rgba(0,0,0,.35), inset -1px 0 0 rgba(0,0,0,.35);"></div>
<div class="sw" style="top:458px;height:16px;background:#6cba42;box-shadow:inset 0 -1px 0 rgba(0,0,0,.55), inset 1px 0 0 rgba(0,0,0,.35), inset -1px 0 0 rgba(0,0,0,.35);"></div>
<div class="sw" style="top:474px;height:16px;background:#a9dd8b;box-shadow:inset 0 -1px 0 rgba(0,0,0,.55), inset 1px 0 0 rgba(0,0,0,.35), inset -1px 0 0 rgba(0,0,0,.35);"></div>
<div class="sw" style="top:490px;height:16px;background:#555550;box-shadow:inset 0 -1px 0 rgba(0,0,0,.55), inset 1px 0 0 rgba(0,0,0,.35), inset -1px 0 0 rgba(0,0,0,.35);"></div>
<div class="sw" style="top:506px;height:16px;background:#7b7b6b;box-shadow:inset 0 -1px 0 rgba(0,0,0,.55), inset 1px 0 0 rgba(0,0,0,.35), inset -1px 0 0 rgba(0,0,0,.35);"></div>
<div class="sw" style="top:522px;height:16px;background:#a3a38b;box-shadow:inset 0 -1px 0 rgba(0,0,0,.55), inset 1px 0 0 rgba(0,0,0,.35), inset -1px 0 0 rgba(0,0,0,.35);"></div>
<div class="sw" style="top:538px;height:16px;background:#aaaa72;box-shadow:inset 0 -1px 0 rgba(0,0,0,.55), inset 1px 0 0 rgba(0,0,0,.35), inset -1px 0 0 rgba(0,0,0,.35);"></div>
<div class="sw" style="top:554px;height:16px;background:#d2ca62;box-shadow:inset 0 -1px 0 rgba(0,0,0,.55), inset 1px 0 0 rgba(0,0,0,.35), inset -1px 0 0 rgba(0,0,0,.35);"></div>
<div class="sw" style="top:570px;height:16px;background:#faf264;box-shadow:inset 0 -1px 0 rgba(0,0,0,.55), inset 1px 0 0 rgba(0,0,0,.35), inset -1px 0 0 rgba(0,0,0,.35);"></div>
<div class="sw" style="top:586px;height:16px;background:#faf28c;box-shadow:inset 0 -1px 0 rgba(0,0,0,.55), inset 1px 0 0 rgba(0,0,0,.35), inset -1px 0 0 rgba(0,0,0,.35);"></div>
<div class="sw" style="top:602px;height:16px;background:#fdfab4;box-shadow:inset 0 -1px 0 rgba(0,0,0,.55), inset 1px 0 0 rgba(0,0,0,.35), inset -1px 0 0 rgba(0,0,0,.35);"></div>
<div class="abs" style="left:204px;top:636px;width:855px;height:15px;background:#d4d0c8;"></div>
<div class="t " style="left:251px;top:637.5px;font-size:12px;color:#202020;letter-spacing:-0.117px;">3 из 3</div>
<div class="track" style="left:636px;top:636px;width:422px;height:14px;"></div>
<div class="sbtn" style="left:636px;top:636px;width:14px;height:14px;"></div>
<div class="sbtn" style="left:1044px;top:636px;width:14px;height:14px;"></div>
<div class="sbtn" style="left:781px;top:636px;width:133px;height:14px;"></div>
<div class="sbtn" style="left:1059px;top:636px;width:14px;height:14px;"></div>
<div class="abs" style="left:1062px;top:639px;width:8px;height:8px;background:#fff;box-shadow:inset 1px 1px 0 #808080;"></div>
<div class="sbtn" style="left:632px;top:636px;width:3px;height:14px;"></div>
<svg width="1280" height="720" viewBox="0 0 1280 720"><path d="M330,636.500 L337,648.500 H421" fill="none" stroke="#000" stroke-width="1"/><path d="M0,0" fill="#d4d0c8"/><path d="M426.500,636.500 L420.500,648.500 H505 L508.500,642" fill="#d4d0c8" stroke="#000" stroke-width="1"/><path d="M503,636 L511,649 H594 L602,636Z" fill="#fff"/><path d="M503,636.500 L511,649 H594 L602,636.500" fill="none" stroke="#000" stroke-width="1.400"/><path d="M602,636.500 H632" stroke="#404040" stroke-width="1"/></svg>
<div class="t " style="left:348px;top:636.5px;font-size:12px;color:#202020;letter-spacing:-0.639px;">Страница 1</div>
<div class="t " style="left:436px;top:636.5px;font-size:12px;color:#202020;letter-spacing:-0.479px;">Страница 2</div>
<div class="t " style="left:519px;top:636.5px;font-size:12px;font-weight:bold;letter-spacing:0.064px;">Страница 3</div>
<div class="hline" style="left:160px;top:651px;width:960px;background:#fff;box-shadow:none;"></div>
<div class="t " style="left:163.7px;top:658px;font-size:10.5px;color:#202020;letter-spacing:-0.198px;">Число узлов: 19</div>
<div class="t " style="left:538px;top:658px;font-size:10.5px;color:#202020;letter-spacing:-0.039px;">Кривая вкл. Layer 1  (Линза)</div>
<div class="t " style="left:163.7px;top:676.5px;font-size:10.5px;color:#202020;letter-spacing:-0.027px;">( 61,436; 191,559 )</div>
<div class="t " style="left:271px;top:676.5px;font-size:10.5px;color:#202020;letter-spacing:-0.009px;">Щелчок+перетаскивание объектов - применение градиентной прозрачности</div>
<div class="t " style="left:943px;top:657px;font-size:10.5px;color:#202020;letter-spacing:-0.391px;">Синий</div>
<div class="t " style="left:943px;top:675.5px;font-size:10.5px;color:#202020;letter-spacing:-0.297px;">Нет</div>
<div class="abs" style="left:1082px;top:656px;width:28px;height:14px;background:#36187e;"></div>
<div class="abs" style="left:1082px;top:675px;width:28px;height:14px;background:#fff;"></div>
<div class="hline" style="left:160px;top:694px;width:960px;background:#fff;box-shadow:none;"></div>
<div class="raised" style="left:162px;top:698px;width:48px;height:20px;"></div>
<div class="t " style="left:180.7px;top:702px;font-size:10.5px;font-weight:bold;letter-spacing:0.470px;">Пуск</div>
<div class="abs" style="left:215px;top:698px;width:148px;height:20px;background:#ebe9e4;box-shadow:inset 1px 1px 0 #404040, inset -1px -1px 0 #fff, inset 2px 2px 0 #808080;"></div>
<div class="t " style="left:238px;top:702px;font-size:10.5px;font-weight:bold;letter-spacing:0.260px;">CorelDRAW X3 - [D:\T...</div>
<div class="abs" style="left:1047px;top:698px;width:70px;height:19px;box-shadow:inset 1px 1px 0 #808080, inset -1px -1px 0 #fff;"></div>
<div class="abs" style="left:1063px;top:700px;width:15px;height:15px;background:#8c0c04;"></div>
<div class="t " style="left:1064.5px;top:701.5px;font-size:10.5px;color:#fff;letter-spacing:-0.422px;font-weight:bold;">En</div>
<div class="t " style="left:1085.3px;top:701.5px;font-size:10.5px;color:#202020;letter-spacing:-0.319px;">13:03</div>
<div class="t " style="left:1051px;top:700.5px;font-size:10.5px;font-weight:bold;letter-spacing:1.156px;">«</div>
<div class="abs" style="left:1238px;top:677px;width:27px;height:27px;box-sizing:border-box;border:1px solid #e0c4c4;background:linear-gradient(180deg,#701414 0%,#4a0c0c 55%,#2c0606 100%);"></div>
<div class="t" style="left:1243px;top:679.5px;font-size:19.5px;line-height:22px;color:#e2b8b8;transform:scaleX(1.1);transform-origin:8px 0;">M</div>
<svg width="1280" height="720" viewBox="0 0 1280 720">
<defs><linearGradient id="ig" x1="0" y1="0" x2="1" y2="1"><stop offset="0" stop-color="#ffffff"/><stop offset="0.55" stop-color="#c4c4e0"/><stop offset="1" stop-color="#7c7cb0"/></linearGradient><linearGradient id="igg" x1="0" y1="0" x2="1" y2="1"><stop offset="0" stop-color="#f4f4f4"/><stop offset="1" stop-color="#b8b8c0"/></linearGradient><radialGradient id="grn" cx="0.35" cy="0.3" r="0.8"><stop offset="0" stop-color="#b4f078"/><stop offset="0.5" stop-color="#3ca828"/><stop offset="1" stop-color="#145c10"/></radialGradient><filter id="ib" x="-10%" y="-10%" width="120%" height="120%"><feGaussianBlur stdDeviation="0.35"/></filter></defs>
<g filter="url(#ib)">
<circle cx="169.2" cy="8.5" r="7.2" fill="url(#grn)" stroke="#1a5a12" stroke-width="0.8"/>
<path d="M166.4,12.3 l0.600,-5.500 c0.500,-2.500 2.500,-4 5,-4.500 l2,1 c0.800,2.500 0,5 -2,6.500 z" fill="#f6fcee"/>
<path d="M169.7,7 l1.500,-3.500 M171.2,7.5 l1.500,-3.500" stroke="#8cc870" stroke-width="0.600"/>
<circle cx="166.6" cy="12.3" r="0.900" fill="#0a2008"/>
<circle cx="226.5" cy="707.5" r="7.2" fill="url(#grn)" stroke="#1a5a12" stroke-width="0.8"/>
<path d="M223.7,711.3 l0.600,-5.500 c0.500,-2.500 2.500,-4 5,-4.500 l2,1 c0.800,2.500 0,5 -2,6.500 z" fill="#f6fcee"/>
<path d="M227,706 l1.500,-3.500 M228.5,706.5 l1.500,-3.500" stroke="#8cc870" stroke-width="0.600"/>
<circle cx="223.9" cy="711.3" r="0.900" fill="#0a2008"/>
<path d="M168.500,22 h7 l4,3.500 v10.800 h-11z" fill="#9cc48c" stroke="#5a8a4c" stroke-width="0.9"/>
<path d="M175.500,22 v3.500 h4z" fill="#e4f0dc" stroke="#5a8a4c" stroke-width="0.600"/>
<path d="M170.800,34.800 l0.600,-5 c0.500,-2.200 2.200,-3.500 4.500,-4.200 l1.800,1 c0.600,2.200 0,4.500 -1.800,5.800 z" fill="#fafdf6"/>
<circle cx="171" cy="34.800" r="0.900" fill="#0a2008"/>
<rect x="1075" y="10" width="6" height="2" fill="#000"/>
<rect x="1091.500" y="4.5" width="5" height="4.500" fill="none" stroke="#000" stroke-width="1"/>
<rect x="1091" y="4" width="6" height="1.300" fill="#000"/>
<rect x="1089.500" y="7.5" width="5" height="4.500" fill="#d4d0c8" stroke="#000" stroke-width="1"/>
<rect x="1089" y="7" width="6" height="1.300" fill="#000"/>
<path d="M1107,4.8 l7,6.500 m0,-6.500 l-7,6.500" stroke="#000" stroke-width="1.500" fill="none"/>
<rect x="1075" y="31" width="6" height="2" fill="#000"/>
<rect x="1091.500" y="25.5" width="5" height="4.500" fill="none" stroke="#000" stroke-width="1"/>
<rect x="1091" y="25" width="6" height="1.300" fill="#000"/>
<rect x="1089.500" y="28.5" width="5" height="4.500" fill="#d4d0c8" stroke="#000" stroke-width="1"/>
<rect x="1089" y="28" width="6" height="1.300" fill="#000"/>
<path d="M1107,25.8 l7,6.500 m0,-6.500 l-7,6.500" stroke="#000" stroke-width="1.500" fill="none"/>
<path d="M174,49.600 L179.500,48.300 L183,51.500 L183.200,59.800 L174.200,62.400Z" fill="url(#ig)" stroke="#34344e" stroke-width="1.100" stroke-linejoin="round"/>
<path d="M179.500,48.300 L179.800,52 L183,51.500" fill="#fff" stroke="#34344e" stroke-width="0.800"/>
<path d="M192.500,49.200 L196.500,48.800 L197.500,50.500 L201,50.300 L201,53 L205.200,52.600 L201.800,59.800 L192.800,62.300Z" fill="url(#ig)" stroke="#34344e" stroke-width="1.100" stroke-linejoin="round"/>
<path d="M192.800,62.300 L196,54.500 L205.200,52.600" fill="none" stroke="#34344e" stroke-width="0.900"/>
<path d="M196.500,56.500 c0.500,-4 3,-6.500 6.500,-6.500 l-0.300,-1.800 l3.300,2.800 l-2.600,3 l-0.200,-1.800 c-2.500,0 -4.500,1.500 -6.700,4.300z" fill="#fff" stroke="#34344e" stroke-width="0.700"/>
<path d="M212,51.300 L222,48.200 L226.400,57.400 L216.600,62.300Z" fill="url(#ig)" stroke="#34344e" stroke-width="1.100" stroke-linejoin="round"/>
<path d="M215.300,51.500 l5.200,-1.600 l1.500,3.200 l-5.200,1.800z" fill="#fff" stroke="#34344e" stroke-width="0.700"/>
<path d="M218.300,57.500 l4,-1.800 l1.600,3.300 l-4,2z" fill="#fff" stroke="#34344e" stroke-width="0.700"/>
<path d="M232.500,56 L236.500,52.500 L243,51 L245.500,54.200 L246.400,59.500 L241,62.300 L235.500,61Z" fill="url(#ig)" stroke="#34344e" stroke-width="1.100" stroke-linejoin="round"/>
<path d="M236.800,52.800 L238.300,48.300 L242.500,49.500 L243,51.500 L239.500,54.500Z" fill="#fff" stroke="#34344e" stroke-width="0.700"/>
<path d="M240,59 l4.500,-2.500 l1.800,2.800 l-4.300,2.600z" fill="#fff" stroke="#34344e" stroke-width="0.700"/>
<path d="M260,51.500 L270.300,59.800 M260.800,58.300 L270.300,49" stroke="#34344e" stroke-width="1.700" fill="none"/>
<path d="M262,53.500 L270.300,59.800 M263,56.500 L270.300,49" stroke="#b8b8d8" stroke-width="0.600" fill="none"/>
<circle cx="258.500" cy="50.600" r="2.100" fill="none" stroke="#34344e" stroke-width="1.300"/><circle cx="259.200" cy="59.500" r="2.100" fill="none" stroke="#34344e" stroke-width="1.300"/>
<rect x="278.500" y="48.800" width="8.500" height="10" fill="#5a5a7a" stroke="#34344e" stroke-width="0.900"/>
<rect x="279.500" y="49.800" width="4" height="5" fill="#c8c8e0"/>
<rect x="283" y="52.500" width="8" height="9.800" fill="#fff" stroke="#34344e" stroke-width="1"/>
<path d="M284.500,55 h5 M284.500,56.800 h5 M284.500,58.600 h5 M284.500,60.400 h5" stroke="#5a5a9a" stroke-width="0.900"/>
<rect x="300" y="49.500" width="8.500" height="10" fill="url(#igg)" stroke="#a8a8b4" stroke-width="0.900"/>
<rect x="302.500" y="48.300" width="3.500" height="2.500" fill="#d0d0d8" stroke="#a8a8b4" stroke-width="0.600"/>
<rect x="305" y="52.800" width="7.500" height="9.500" fill="#ececf0" stroke="#a8a8b4" stroke-width="0.900"/>
<path d="M306.500,55.500 h4.500 M306.500,57.300 h4.500 M306.500,59.100 h4.500" stroke="#c0c0c8" stroke-width="0.800"/>
<path d="M322.500,59.800 L326,53 C328,49.500 333,49 336,52 C337.500,53.500 337.500,55.500 337,56.500 C335.500,54.500 333.500,54.500 332,56 C331,57 330.500,58.500 330.300,59.800 Z" fill="url(#ig)" stroke="#34344e" stroke-width="1.100" stroke-linejoin="round"/>
<polygon points="343.7,54.8 348.7,54.8 346.2,57.2" fill="#000"/>
<g transform="translate(694.500,0) scale(-1,1)"><path d="M322.500,59.800 L326,53 C328,49.500 333,49 336,52 C337.500,53.500 337.500,55.500 337,56.500 C335.500,54.500 333.500,54.500 332,56 C331,57 330.500,58.500 330.300,59.800 Z" fill="url(#igg)" stroke="#b4b4bc" stroke-width="1" stroke-linejoin="round"/></g>
<polygon points="378.3,54.8 383.3,54.8 380.8,57.2" fill="#a0a09a"/>
<rect x="399.500" y="48.500" width="8" height="9" fill="url(#ig)" stroke="#34344e" stroke-width="0.9"/>
<rect x="395.500" y="53.500" width="8" height="8" fill="#d8d8ec" stroke="#34344e" stroke-width="0.9"/>
<rect x="397.500" y="57" width="4" height="3" fill="#fff" stroke="#34344e" stroke-width="0.6"/>
<path d="M401,50.500 h4 M405,50.500 l-1.500,-1.500 M405,50.500 l-1.500,1.500" stroke="#34344e" stroke-width="0.9" fill="none"/>
<rect x="417" y="48.500" width="9" height="9.500" fill="url(#ig)" stroke="#34344e" stroke-width="0.9"/>
<rect x="423" y="54" width="7" height="7.500" fill="#d8d8ec" stroke="#34344e" stroke-width="0.9"/>
<path d="M425,51 h5 M430,51 l-1.500,-1.500 M430,51 l-1.500,1.500" stroke="#34344e" stroke-width="0.9" fill="none"/>
<path d="M447.500,49 c2.500,2 3,5 3,9 l2.500,3 h-3 l-1,-1.500 h-3 l-1,1.500 h-3 l2.500,-3 c0,-4 0.500,-7 3,-9z" fill="url(#ig)" stroke="#34344e" stroke-width="0.9"/>
<polygon points="461.8,54.8 466.8,54.8 464.3,57.2" fill="#000"/>
<path d="M477,50 l4,5 l-5,7 M481,55 h8 M485,49 v13 M483,51 l5,8 M488,51 l-5,8 M481,61.500 h8" stroke="#34344e" stroke-width="0.9" fill="none"/>
<polygon points="568.5,54.5 575.5,54.5 572.0,58.0" fill="#000"/>
<rect x="176.500" y="78.500" width="10" height="8" fill="url(#ig)" stroke="#34344e" stroke-width="0.9"/>
<rect x="180" y="80.500" width="5" height="3.500" fill="#fff" stroke="#34344e" stroke-width="0.6"/>
<path d="M173.500,82.500 c0,-2 5,-2 5,0 c0,2 -2,3 -2.500,4 v4 M173.500,91.500 h5" fill="#b0b0d4" stroke="#34344e" stroke-width="1"/>
<polygon points="281.2,84.5 288.2,84.5 284.7,88.0" fill="#000"/>
<polygon points="383.0,84.5 390.0,84.5 386.5,88.0" fill="#000"/>
<polygon points="589.5,84.5 596.5,84.5 593.0,88.0" fill="#000"/>
<path d="M411,82 v6.500 M411,85.200 h9 M420.500,85.200 l-2.500,-2.200 M420.500,85.200 l-2.500,2.200" stroke="#606068" stroke-width="1" fill="none"/>
<path d="M620.600,79.500 v12 M614.800,82.500 l11.600,6 M614.800,88.500 l11.600,-6 M618.600,80.500 l2,2 l2,-2 M618.600,90.500 l2,-2 l2,2 M615,85.500 l2.500,0 M626,85.500 l-2.500,0" stroke="#3a3a5a" stroke-width="1" fill="none"/>
<rect x="638.500" y="78.500" width="5" height="5" fill="#e8e8f4" stroke="#34344e" stroke-width="0.9"/>
<rect x="646.500" y="80.500" width="5" height="5" fill="#e8e8f4" stroke="#34344e" stroke-width="0.9"/>
<path d="M645,87 h5.500 v6 h-5.500z" fill="url(#ig)" stroke="#34344e" stroke-width="0.9"/>
<circle cx="665.400" cy="85.500" r="6.300" fill="#f6d8d0" stroke="#d02818" stroke-width="2.200"/>
<rect x="662" y="83.500" width="4" height="4.500" fill="#fff" stroke="#803020" stroke-width="0.7"/><rect x="665" y="81.500" width="4" height="4.500" fill="#fff" stroke="#803020" stroke-width="0.7"/>
<path d="M661,81 l9,9" stroke="#d02818" stroke-width="1.800"/>
<path d="M168.500,112 v12 l3,-2.800 l2.200,4.800 l1.800,-0.800 l-2.200,-4.800 h4z" fill="url(#ig)" stroke="#34344e" stroke-width="0.9"/>
<path d="M166.500,145 c0.500,-5 3,-9 7.500,-12.500" fill="none" stroke="#34344e" stroke-width="1.200"/>
<path d="M170,137.500 l6.500,5.500 l-6,2z" fill="#e8e8f4" stroke="#34344e" stroke-width="0.9"/>
<rect x="169.300" y="136.500" width="2.400" height="2.400" fill="#34344e"/>
<polygon points="181.3,143.8 181.3,147.8 177.3,147.8" fill="#000"/>
<path d="M170,155.500 v9 h8 M167,158.500 h8.500 v8.500 M176.500,156 l-7.500,8.500" fill="none" stroke="#34344e" stroke-width="1.300"/>
<polygon points="181.3,164.3 181.3,168.3 177.3,168.3" fill="#000"/>
<circle cx="173" cy="179.500" r="5.800" fill="url(#ig)" stroke="#34344e" stroke-width="1"/>
<ellipse cx="172" cy="177.500" rx="3" ry="2" fill="#fff" opacity="0.9"/>
<path d="M169,184 l-3.500,4" stroke="#34344e" stroke-width="1.800"/>
<polygon points="181.3,185.3 181.3,189.3 177.3,189.3" fill="#000"/>
<path d="M168,204 l5.500,-8.500 l3.500,2.500 l-5.500,8z" fill="url(#ig)" stroke="#34344e" stroke-width="0.9"/>
<path d="M173.500,195.500 l1.200,-1.800 l3.500,2.500 l-1.200,1.800" fill="#5a5a8a" stroke="#34344e" stroke-width="0.8"/>
<path d="M166.500,207 c1.500,-2.500 3,1 5,-0.500 c1.500,-1 2.500,0.500 4,1" fill="none" stroke="#34344e" stroke-width="1"/>
<polygon points="181.3,205.8 181.3,209.8 177.3,209.8" fill="#000"/>
<path d="M166,219 l4,-3.500 l5,5.500 l-4,4z" fill="url(#ig)" stroke="#34344e" stroke-width="0.9"/>
<path d="M170,215.500 c2,-1 3,0 3,1.500" fill="none" stroke="#34344e" stroke-width="0.9"/>
<rect x="172.500" y="220.500" width="5" height="5" fill="#48b0a8" stroke="#1a5a58" stroke-width="0.8"/><rect x="175" y="223" width="5" height="5" fill="#68c8c0" stroke="#1a5a58" stroke-width="0.8"/>
<rect x="166.500" y="237.500" width="11" height="9.500" fill="url(#ig)" stroke="#34344e" stroke-width="1"/>
<polygon points="181.3,246.3 181.3,250.3 177.3,250.3" fill="#000"/>
<ellipse cx="172.300" cy="263.200" rx="6.600" ry="4.600" fill="url(#ig)" stroke="#34344e" stroke-width="1"/>
<polygon points="181.3,267.3 181.3,271.3 177.3,271.3" fill="#000"/>
<path d="M172.300,278.300 l6.500,5 l-2.500,6.500 h-8 l-2.500,-6.500z" fill="url(#ig)" stroke="#34344e" stroke-width="1"/>
<polygon points="181.3,288.3 181.3,292.3 177.3,292.3" fill="#000"/>
<circle cx="174.500" cy="302" r="4" fill="#e8e8f4" stroke="#34344e" stroke-width="0.9"/>
<path d="M166.500,298 h5 l-2,5 h-3z" fill="url(#ig)" stroke="#34344e" stroke-width="0.9"/>
<rect x="168.500" y="304" width="6.500" height="6.500" fill="url(#ig)" stroke="#34344e" stroke-width="0.9"/>
<polygon points="181.3,308.8 181.3,312.8 177.3,312.8" fill="#000"/>
<path d="M165.500,331.500 l5.500,-12.500 h3 l5.500,12.500 h-4 l-1,-2.800 h-4.200 l-1,2.800z M171.300,326 h2.600 l-1.300,-3.600z" fill="url(#ig)" fill-rule="evenodd" stroke="#34344e" stroke-width="0.9"/>
<path d="M166.500,345.500 h7.500 c0,3.500 -1.500,5.500 -3.200,6 v4 l2.200,1.500 h-5.500 l2.200,-1.500 v-4 c-1.700,-0.500 -3.200,-2.500 -3.200,-6z" fill="#fff" stroke="#34344e" stroke-width="0.9"/>
<path d="M175,349 l5.500,-2.500 l-2,5 l-4.500,3z" fill="#7878a8" opacity="0.75"/>
<polygon points="181.3,354.8 181.3,358.8 177.3,358.8" fill="#000"/>
<path d="M165.500,380.500 l1,-3 l6,-6.500 l2,2 l-6,6.500z" fill="url(#ig)" stroke="#34344e" stroke-width="0.9"/>
<circle cx="175.500" cy="369.500" r="2.800" fill="#6a6a9a" stroke="#34344e" stroke-width="0.8"/>
<polygon points="181.3,377.8 181.3,381.8 177.3,381.8" fill="#000"/>
<path d="M173,387.500 c3,3 4,6 3.500,9.500 h-7 c-0.500,-3.500 0.500,-6.500 3.500,-9.500z" fill="url(#ig)" stroke="#34344e" stroke-width="0.9"/>
<path d="M173,388 v6.500" stroke="#34344e" stroke-width="0.8"/><rect x="169.500" y="397" width="7" height="3.500" fill="#6a6a9a" stroke="#34344e" stroke-width="0.8"/>
<polygon points="181.3,398.3 181.3,402.3 177.3,402.3" fill="#000"/>
<path d="M165.500,414 l6,-5 l6,6.500 l-5.500,6z" fill="url(#ig)" stroke="#34344e" stroke-width="0.9"/>
<path d="M171.500,409 c2.500,-1.500 4.500,-0.500 4.500,2" fill="none" stroke="#34344e" stroke-width="0.9"/>
<path d="M177,414.500 c1,1 2,2.500 1.500,4" fill="none" stroke="#34344e" stroke-width="0.9"/>
<polygon points="181.3,419.3 181.3,423.3 177.3,423.3" fill="#000"/>
<path d="M165.500,435 l5,-5 l5.500,5.500 l-4.500,5z" fill="url(#ig)" stroke="#34344e" stroke-width="0.9"/>
<path d="M170.500,430 c2,-1.500 4,-0.500 4,1.500" fill="none" stroke="#34344e" stroke-width="0.9"/>
<path d="M171,441 l9.500,-2 v5z" fill="#7878a8" opacity="0.7"/>
<polygon points="181.3,440.3 181.3,444.3 177.3,444.3" fill="#000"/>
<polygon points="1063.0,128.2 1070.0,128.2 1066.5,124.8" fill="#000"/>
<polygon points="1063.0,625.8 1070.0,625.8 1066.5,629.2" fill="#000"/>
<polygon points="644.8,639.5 644.8,646.5 641.2,643.0" fill="#000"/>
<polygon points="1049.2,639.5 1049.2,646.5 1052.8,643.0" fill="#000"/>
<polygon points="1105.0,132.2 1114.0,132.2 1109.5,127.8" fill="#000"/>
<polygon points="1105.5,623.0 1113.5,623.0 1109.5,627.0" fill="#000"/>
<rect x="1106" y="637" width="1.800" height="8" fill="#000"/><polygon points="1112.8,637.0 1112.8,645.0 1108.8,641.0" fill="#000"/>
<path d="M1102,139 l15,14 M1117,139 l-15,14" stroke="#000" stroke-width="1"/>
<rect x="1104" y="109.500" width="3.500" height="3.500" fill="none" stroke="#000" stroke-width="1"/><rect x="1104" y="115" width="3.500" height="3.500" fill="none" stroke="#000" stroke-width="1"/><path d="M1109.500,110.500 h5" stroke="#000" stroke-width="1.300"/><path d="M1115,114.500 v4.500 h-4.500z" fill="#000"/>
<polygon points="1085.0,107.7 1085.0,112.7 1082.5,110.2" fill="#000"/><polygon points="1089.2,107.7 1089.2,112.7 1086.8,110.2" fill="#000"/>
<rect x="1083.500" y="135.500" width="4" height="4" fill="#d8d8f0" stroke="#3a3a8a" stroke-width="1"/><circle cx="1080.500" cy="137.500" r="1.300" fill="none" stroke="#3a3a8a" stroke-width="0.8"/><path d="M1080.500,139 v9 M1085.500,140 v5 h2" stroke="#8080a0" stroke-width="0.7" stroke-dasharray="1 1" fill="none"/><rect x="1088.500" y="146" width="4" height="4" fill="#d8d8f0" stroke="#3a3a8a" stroke-width="1"/><circle cx="1090.500" cy="142" r="1.200" fill="none" stroke="#3a3a8a" stroke-width="0.8"/>
<path d="M1087.500,264.500 v7 M1084,268 h7 M1087.500,264.500 l-1.500,1.500 M1087.500,264.500 l1.500,1.500 M1084,268 l1.500,-1.500 M1084,268 l1.500,1.500 M1091,268 l-1.500,-1.500 M1091,268 l-1.500,1.500" stroke="#2a2a6a" stroke-width="0.9" fill="none"/><path d="M1084.500,274.500 c1,2.500 4.500,2.500 5.500,0 M1084.500,274.500 l-1,-1.500 M1084.500,274.500 l1.800,-0.500" stroke="#2a2a6a" stroke-width="1" fill="none"/>
<rect x="207.500" y="639" width="1.800" height="8" fill="#000"/><polygon points="214.3,639.0 214.3,647.0 210.3,643.0" fill="#000"/>
<polygon points="229.3,639.0 229.3,647.0 225.3,643.0" fill="#000"/>
<path d="M303.500,643 h7.500 M307.200,639.300 v7.500" stroke="#000" stroke-width="1.800"/>
<polygon points="318.5,639.0 318.5,647.0 322.5,643.0" fill="#000"/><rect x="323.300" y="639" width="1.800" height="8" fill="#000"/>
<path d="M926,664 l5.500,-6 l6,5 l-5.500,6.500z" fill="url(#ig)" stroke="#34344e" stroke-width="0.9"/>
<path d="M931.500,658 c2,-2 4.500,-1.500 5,1" fill="none" stroke="#34344e" stroke-width="0.9"/><path d="M938,663.500 c1.200,1 1.800,2.500 1.200,4" fill="none" stroke="#34344e" stroke-width="0.9"/>
<path d="M932.500,675.500 c2.800,2.500 3.500,5.500 3,8.500 h-6 c-0.500,-3 0.200,-6 3,-8.500z" fill="url(#ig)" stroke="#34344e" stroke-width="0.9"/>
<path d="M932.500,676 v5.500" stroke="#34344e" stroke-width="0.7"/><rect x="929.800" y="684.500" width="5.500" height="3.500" fill="#6a6a9a" stroke="#34344e" stroke-width="0.8"/>
<path d="M1086,678 c7,3.500 13,5.500 20,8 M1106,678 c-7,3.500 -13,5.500 -20,8" stroke="#444" stroke-width="1.100" fill="none"/>
<path d="M166,703.500 c2,-1.500 4,-1.500 6,-0.500 l-1,4.500 c-2,-1 -4,-1 -6,0.500z" fill="#e04818"/><path d="M172.800,703.300 c2,1 4,1 6,-0.500 l-1,4.500 c-2,1.500 -4,1.500 -6,0.500z" fill="#48a838"/><path d="M164.800,708.800 c2,-1.500 4,-1.500 6,-0.500 l-1,4.500 c-2,-1 -4,-1 -6,0.500z" fill="#3868d8"/><path d="M171.600,708.600 c2,1 4,1 6,-0.500 l-1,4.500 c-2,1.500 -4,1.500 -6,0.500z" fill="#f0c020"/>
<path d="M386.500,86.500 v14.500 l3.300,-3.200 l2.600,6 l2.200,-1 l-2.600,-5.800 h4.500z" fill="#fff" stroke="#000" stroke-width="0.9"/>
</g>
</svg>
</div>
</body></html>
